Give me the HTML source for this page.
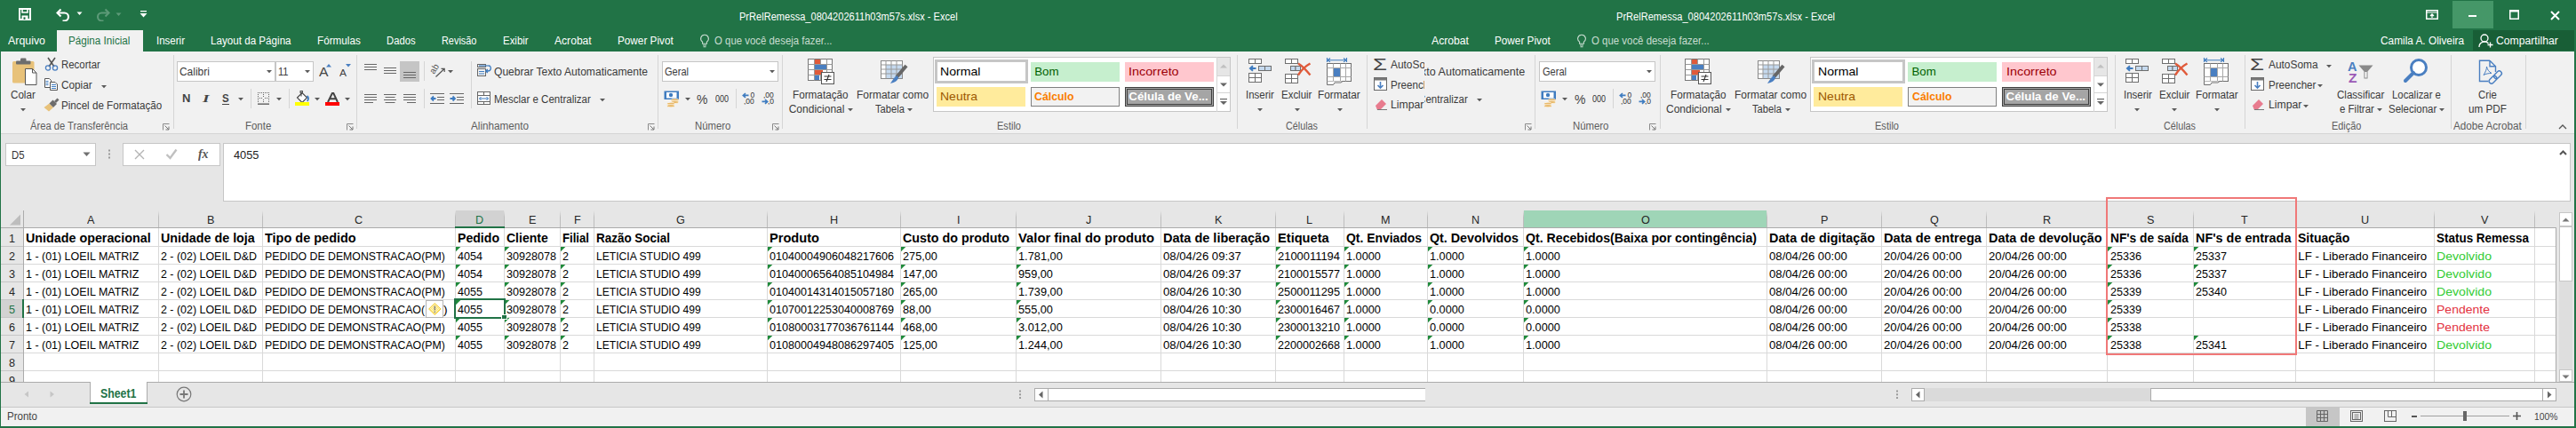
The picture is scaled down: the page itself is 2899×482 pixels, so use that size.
<!DOCTYPE html>
<html><head><meta charset="utf-8"><style>
html,body{margin:0;padding:0;}
body{width:2899px;height:482px;position:relative;overflow:hidden;background:#217346;font-family:"Liberation Sans",sans-serif;}
.t{position:absolute;white-space:nowrap;line-height:1;transform-origin:0 0;}
</style></head><body>
<div style="position:absolute;left:0px;top:0px;width:2899px;height:482px;background:#217346"></div>
<div style="position:absolute;left:1px;top:58px;width:2896px;height:92px;background:#f1f1f1"></div>
<div style="position:absolute;left:1px;top:150px;width:2896px;height:1px;background:#d4d4d4"></div>
<div style="position:absolute;left:1px;top:151px;width:2896px;height:279px;background:#e6e6e6"></div>
<div style="position:absolute;left:1px;top:430px;width:2896px;height:29px;background:#e6e6e6"></div>
<div style="position:absolute;left:1px;top:459px;width:2896px;height:21px;background:#f1f1f1"></div>
<svg style="position:absolute;left:20px;top:8px;" width="16" height="16" viewBox="0 0 16 16"><path d="M2 2h12v12H2z" fill="none" stroke="#fff" stroke-width="2"/><path d="M5 2v4h6V2" fill="none" stroke="#fff" stroke-width="1.6"/><path d="M4.5 14v-4.5h7V14" fill="#fff"/><rect x="6.5" y="11.3" width="2" height="2.7" fill="#217346"/></svg>
<svg style="position:absolute;left:62px;top:8px;" width="18" height="16" viewBox="0 0 18 16"><path d="M2.5 6.5h8a4.5 4.5 0 0 1 0 9h-2" fill="none" stroke="#fff" stroke-width="2.1"/><path d="M6.5 2.5l-4 4 4 4" fill="none" stroke="#fff" stroke-width="2.1"/></svg>
<svg style="position:absolute;left:86px;top:13px;" width="8" height="5" viewBox="0 0 8 5"><path d="M0.5 0.5h6l-3 3.5z" fill="#fff"/></svg>
<svg style="position:absolute;left:107px;top:8px;" width="18" height="16" viewBox="0 0 18 16"><path d="M15.5 6.5h-8a4.5 4.5 0 0 0 0 9h2" fill="none" stroke="#5d9a78" stroke-width="2.1"/><path d="M11.5 2.5l4 4-4 4" fill="none" stroke="#5d9a78" stroke-width="2.1"/></svg>
<svg style="position:absolute;left:130px;top:14px;" width="8" height="5" viewBox="0 0 8 5"><path d="M0.5 0.5h6l-3 3.5z" fill="#5d9a78"/></svg>
<svg style="position:absolute;left:157px;top:11px;" width="9" height="10" viewBox="0 0 9 10"><rect x="1" y="1" width="7" height="1.3" fill="#fff"/><path d="M0.5 4h8l-4 4.5z" fill="#fff"/></svg>
<div class="t" id="t0" style="left:832.00px;top:12.84px;font-size:12px;font-weight:400;color:#ffffff;font-family:'Liberation Sans',sans-serif;transform:scaleX(0.9213);">PrRelRemessa_0804202611h03m57s.xlsx - Excel</div>
<div class="t" id="t1" style="left:1818.70px;top:12.84px;font-size:12px;font-weight:400;color:#ffffff;font-family:'Liberation Sans',sans-serif;transform:scaleX(0.9228);">PrRelRemessa_0804202611h03m57s.xlsx - Excel</div>
<svg style="position:absolute;left:2729.5px;top:11px;" width="14" height="11" viewBox="0 0 14 11"><rect x="0.75" y="0.75" width="12.5" height="9.5" fill="none" stroke="#fff" stroke-width="1.5"/><path d="M0.5 3h13" stroke="#fff"/><path d="M7 9V5M5 7l2-2 2 2" fill="none" stroke="#fff" stroke-width="1.3"/></svg>
<div style="position:absolute;left:2760px;top:1px;width:46px;height:31px;background:#459768"></div>
<div style="position:absolute;left:2778px;top:16.5px;width:9px;height:2px;background:#fff"></div>
<svg style="position:absolute;left:2824px;top:11px;" width="11" height="11" viewBox="0 0 11 11"><rect x="0.75" y="0.75" width="9.5" height="9.5" fill="none" stroke="#fff" stroke-width="1.5"/><rect x="0" y="0" width="11" height="2.5" fill="#fff"/></svg>
<svg style="position:absolute;left:2869.5px;top:11.5px;" width="11" height="11" viewBox="0 0 11 11"><path d="M1 1l9 9M10 1l-9 9" stroke="#fff" stroke-width="2"/></svg>
<div style="position:absolute;left:64px;top:34px;width:97px;height:24px;background:#f1f1f1"></div>
<div class="t" id="t2" style="left:9.00px;top:40.34px;font-size:12px;font-weight:400;color:#ffffff;font-family:'Liberation Sans',sans-serif;transform:scaleX(1.0323);">Arquivo</div>
<div class="t" id="t3" style="left:77.30px;top:40.34px;font-size:12px;font-weight:400;color:#217346;font-family:'Liberation Sans',sans-serif;transform:scaleX(0.9721);">Página Inicial</div>
<div class="t" id="t4" style="left:176.00px;top:40.34px;font-size:12px;font-weight:400;color:#ffffff;font-family:'Liberation Sans',sans-serif;transform:scaleX(0.9597);">Inserir</div>
<div class="t" id="t5" style="left:237.00px;top:40.34px;font-size:12px;font-weight:400;color:#ffffff;font-family:'Liberation Sans',sans-serif;transform:scaleX(0.9698);">Layout da Página</div>
<div class="t" id="t6" style="left:357.00px;top:40.34px;font-size:12px;font-weight:400;color:#ffffff;font-family:'Liberation Sans',sans-serif;transform:scaleX(0.9757);">Fórmulas</div>
<div class="t" id="t7" style="left:435.30px;top:40.34px;font-size:12px;font-weight:400;color:#ffffff;font-family:'Liberation Sans',sans-serif;transform:scaleX(0.9398);">Dados</div>
<div class="t" id="t8" style="left:497.40px;top:40.34px;font-size:12px;font-weight:400;color:#ffffff;font-family:'Liberation Sans',sans-serif;transform:scaleX(0.9087);">Revisão</div>
<div class="t" id="t9" style="left:566.30px;top:40.34px;font-size:12px;font-weight:400;color:#ffffff;font-family:'Liberation Sans',sans-serif;transform:scaleX(0.9528);">Exibir</div>
<div class="t" id="t10" style="left:624.20px;top:40.34px;font-size:12px;font-weight:400;color:#ffffff;font-family:'Liberation Sans',sans-serif;transform:scaleX(1.0082);">Acrobat</div>
<div class="t" id="t11" style="left:695.40px;top:40.34px;font-size:12px;font-weight:400;color:#ffffff;font-family:'Liberation Sans',sans-serif;transform:scaleX(0.9792);">Power Pivot</div>
<svg style="position:absolute;left:787px;top:38px;" width="12" height="16" viewBox="0 0 12 16"><path d="M6 1.2a4.3 4.3 0 0 0-2.4 7.9v2.2h4.8V9.1A4.3 4.3 0 0 0 6 1.2z" fill="none" stroke="#c9ddd1" stroke-width="1.1"/><path d="M4 13h4M4.5 14.8h3" stroke="#c9ddd1" stroke-width="1.1"/></svg>
<div class="t" id="t12" style="left:804.10px;top:40.34px;font-size:12px;font-weight:400;color:#c9ddd1;font-family:'Liberation Sans',sans-serif;transform:scaleX(0.9504);">O que você deseja fazer...</div>
<div class="t" id="t13" style="left:1611.00px;top:40.34px;font-size:12px;font-weight:400;color:#ffffff;font-family:'Liberation Sans',sans-serif;transform:scaleX(1.0155);">Acrobat</div>
<div class="t" id="t14" style="left:1682.00px;top:40.34px;font-size:12px;font-weight:400;color:#ffffff;font-family:'Liberation Sans',sans-serif;transform:scaleX(0.9792);">Power Pivot</div>
<svg style="position:absolute;left:1773.5px;top:38px;" width="12" height="16" viewBox="0 0 12 16"><path d="M6 1.2a4.3 4.3 0 0 0-2.4 7.9v2.2h4.8V9.1A4.3 4.3 0 0 0 6 1.2z" fill="none" stroke="#c9ddd1" stroke-width="1.1"/><path d="M4 13h4M4.5 14.8h3" stroke="#c9ddd1" stroke-width="1.1"/></svg>
<div class="t" id="t15" style="left:1790.60px;top:40.34px;font-size:12px;font-weight:400;color:#c9ddd1;font-family:'Liberation Sans',sans-serif;transform:scaleX(0.9525);">O que você deseja fazer...</div>
<div class="t" id="t16" style="left:2678.90px;top:40.34px;font-size:12px;font-weight:400;color:#ffffff;font-family:'Liberation Sans',sans-serif;transform:scaleX(0.9866);">Camila A. Oliveira</div>
<div style="position:absolute;left:2783px;top:34px;width:114px;height:23px;background:#185e36"></div>
<svg style="position:absolute;left:2789px;top:37px;" width="18" height="18" viewBox="0 0 18 18"><circle cx="7" cy="6" r="4" fill="none" stroke="#fff" stroke-width="1.3"/><path d="M1 16a6 6 0 0 1 10.5-4" fill="none" stroke="#fff" stroke-width="1.3"/><path d="M13.5 10.5v6M10.5 13.5h6" stroke="#fff" stroke-width="1.3"/></svg>
<div class="t" id="t17" style="left:2809.00px;top:40.34px;font-size:12px;font-weight:400;color:#ffffff;font-family:'Liberation Sans',sans-serif;transform:scaleX(1.0160);">Compartilhar</div>
<div style="position:absolute;left:0;top:0;width:1603px;height:150px;overflow:hidden">
<svg style="position:absolute;left:13px;top:64px;" width="30" height="33" viewBox="0 0 30 33"><rect x="1" y="5" width="24.5" height="24.5" rx="1.5" fill="#e8c27a"/><rect x="5" y="4.5" width="16.5" height="4" rx="1" fill="#6d6d6d"/><rect x="10" y="1.5" width="6.5" height="4" rx="1.2" fill="#6d6d6d"/><path d="M15.5 13.5h8l4.5 4.5v13.5h-12.5z" fill="#fff" stroke="#555"/><path d="M23.5 13.5v4.5h4.5" fill="none" stroke="#555"/></svg>
<div class="t" id="t18" style="left:12.20px;top:100.84px;font-size:12px;font-weight:400;color:#3a3a3a;font-family:'Liberation Sans',sans-serif;transform:scaleX(0.9691);">Colar</div>
<svg style="position:absolute;left:23px;top:121.5px;" width="6" height="4" viewBox="0 0 6 4"><path d="M0 0H6L3 3.2z" fill="#595959"/></svg>
<svg style="position:absolute;left:50px;top:64px;" width="16" height="16" viewBox="0 0 16 16"><path d="M4 1l7 10M12 1L5 11" stroke="#555" stroke-width="1.6"/><circle cx="4" cy="12.5" r="2.6" fill="none" stroke="#4a7fc1" stroke-width="1.3"/><circle cx="12" cy="12.5" r="2.6" fill="none" stroke="#4a7fc1" stroke-width="1.3"/></svg>
<div class="t" id="t19" style="left:69.30px;top:66.84px;font-size:12px;font-weight:400;color:#3a3a3a;font-family:'Liberation Sans',sans-serif;transform:scaleX(0.9519);">Recortar</div>
<svg style="position:absolute;left:49px;top:87px;" width="17" height="16" viewBox="0 0 17 16"><path d="M1.5 1.5H6.5L8.5 3.5V11.5H1.5Z" fill="#fff" stroke="#555"/><g fill="#3f7cc0"><rect x="2.5" y="4" width="3" height="1"/><rect x="2.5" y="6" width="3" height="1"/><rect x="2.5" y="8" width="3" height="1"/></g><path d="M7.5 5.5H13L15.5 8V14.5H7.5Z" fill="#fff" stroke="#555"/><g fill="#3f7cc0"><rect x="9" y="8" width="5" height="1"/><rect x="9" y="10" width="5" height="1"/><rect x="9" y="12" width="5" height="1"/></g></svg>
<div class="t" id="t20" style="left:69.30px;top:90.14px;font-size:12px;font-weight:400;color:#3a3a3a;font-family:'Liberation Sans',sans-serif;transform:scaleX(0.9814);">Copiar</div>
<svg style="position:absolute;left:114.3px;top:96px;" width="6" height="4" viewBox="0 0 6 4"><path d="M0 0H6L3 3.2z" fill="#595959"/></svg>
<svg style="position:absolute;left:49px;top:109px;" width="18" height="17" viewBox="0 0 18 17"><path d="M0.5 12L6.5 7.5L11 12L6 16.5Z" fill="#e8c27a"/><path d="M6.5 7.5L10.5 3.5L15 8L11 12Z" fill="#6d6d6d"/><path d="M12 5L15.5 1.5L17.5 3.5L14 7Z" fill="#6d6d6d"/></svg>
<div class="t" id="t21" style="left:69.30px;top:112.94px;font-size:12px;font-weight:400;color:#3a3a3a;font-family:'Liberation Sans',sans-serif;transform:scaleX(0.9697);">Pincel de Formatação</div>
<div class="t" id="t22" style="left:33.70px;top:136.04px;font-size:12px;font-weight:400;color:#5c5c5c;font-family:'Liberation Sans',sans-serif;transform:scaleX(0.9324);">Área de Transferência</div>
<svg style="position:absolute;left:183px;top:139px;" width="8" height="8" viewBox="0 0 8 8"><path d="M0.5 7.5V0.5H7.5" fill="none" stroke="#8a8a8a"/><path d="M2.5 2.5L7 7M7 3.5V7H3.5" fill="none" stroke="#777"/></svg>
<div style="position:absolute;left:194.5px;top:62px;width:1px;height:83px;background:#d5d5d5"></div>
<div style="position:absolute;left:199px;top:69px;width:111px;height:23px;background:#fff;box-sizing:border-box;border:1px solid #c6c6c6"></div>
<div class="t" id="t23" style="left:202.20px;top:74.54px;font-size:12px;font-weight:400;color:#3a3a3a;font-family:'Liberation Sans',sans-serif;transform:scaleX(0.9937);">Calibri</div>
<svg style="position:absolute;left:300px;top:79px;" width="6" height="4" viewBox="0 0 6 4"><path d="M0 0H6L3 3.2z" fill="#595959"/></svg>
<div style="position:absolute;left:309.5px;top:69px;width:43px;height:23px;background:#fff;box-sizing:border-box;border:1px solid #c6c6c6"></div>
<div class="t" id="t24" style="left:313.20px;top:74.54px;font-size:12px;font-weight:400;color:#3a3a3a;font-family:'Liberation Sans',sans-serif;transform:scaleX(0.9223);">11</div>
<svg style="position:absolute;left:343px;top:79px;" width="6" height="4" viewBox="0 0 6 4"><path d="M0 0H6L3 3.2z" fill="#595959"/></svg>
<div class="t" id="t25" style="left:358.50px;top:74.45px;font-size:14px;font-weight:400;color:#444;font-family:'Liberation Sans',sans-serif;transform:scaleX(1.1237);">A</div>
<svg style="position:absolute;left:367px;top:72px;" width="6" height="4" viewBox="0 0 6 4"><path d="M0 3.5L3 0 6 3.5z" fill="#4a7fc1"/></svg>
<div class="t" id="t26" style="left:382.00px;top:76.99px;font-size:11px;font-weight:400;color:#444;font-family:'Liberation Sans',sans-serif;transform:scaleX(1.0894);">A</div>
<svg style="position:absolute;left:388.5px;top:72px;" width="6" height="4" viewBox="0 0 6 4"><path d="M0 0H6L3 3.5z" fill="#4a7fc1"/></svg>
<div class="t" id="t27" style="left:205.00px;top:104.62px;font-size:12.5px;font-weight:700;color:#444;font-family:'Liberation Sans',sans-serif;transform:scaleX(1.0408);">N</div>
<div class="t" id="t28" style="left:227.50px;top:103.77px;font-size:13.5px;font-weight:700;color:#444;font-family:'Liberation Serif',sans-serif;transform:scaleX(1.4243);font-style:italic;">I</div>
<div class="t" id="t29" style="left:250.00px;top:104.62px;font-size:12.5px;font-weight:700;color:#444;font-family:'Liberation Sans',sans-serif;transform:scaleX(0.9228);">S</div>
<div style="position:absolute;left:250px;top:117px;width:8px;height:1.2px;background:#444"></div>
<svg style="position:absolute;left:268px;top:110px;" width="6" height="4" viewBox="0 0 6 4"><path d="M0 0H6L3 3.2z" fill="#595959"/></svg>
<div style="position:absolute;left:281.5px;top:100px;width:1px;height:22px;background:#d5d5d5"></div>
<svg style="position:absolute;left:290px;top:104px;" width="14" height="15" viewBox="0 0 14 15"><g fill="#666"><rect x="0" y="0" width="1" height="1"/><rect x="2" y="0" width="1" height="1"/><rect x="4" y="0" width="1" height="1"/><rect x="6" y="0" width="1" height="1"/><rect x="8" y="0" width="1" height="1"/><rect x="10" y="0" width="1" height="1"/><rect x="12" y="0" width="1" height="1"/><rect x="0" y="2" width="1" height="1"/><rect x="0" y="4" width="1" height="1"/><rect x="0" y="6" width="1" height="1"/><rect x="0" y="8" width="1" height="1"/><rect x="0" y="10" width="1" height="1"/><rect x="12" y="2" width="1" height="1"/><rect x="12" y="4" width="1" height="1"/><rect x="12" y="6" width="1" height="1"/><rect x="12" y="8" width="1" height="1"/><rect x="12" y="10" width="1" height="1"/><rect x="6" y="2" width="1" height="1"/><rect x="6" y="4" width="1" height="1"/><rect x="6" y="8" width="1" height="1"/><rect x="6" y="10" width="1" height="1"/><rect x="2" y="6" width="1" height="1"/><rect x="4" y="6" width="1" height="1"/><rect x="8" y="6" width="1" height="1"/><rect x="10" y="6" width="1" height="1"/></g><rect x="0" y="12.5" width="13" height="1.3" fill="#555"/></svg>
<svg style="position:absolute;left:311px;top:110px;" width="6" height="4" viewBox="0 0 6 4"><path d="M0 0H6L3 3.2z" fill="#595959"/></svg>
<div style="position:absolute;left:324.5px;top:100px;width:1px;height:22px;background:#d5d5d5"></div>
<svg style="position:absolute;left:332px;top:102px;" width="17" height="17" viewBox="0 0 17 17"><path d="M2.5 8l5.5-5.5 5.5 5.5-5.5 5.5z" fill="#fff" stroke="#444" stroke-width="1.1"/><path d="M7 1.5v5" stroke="#444" stroke-width="1.1"/><rect x="6" y="0.5" width="2.5" height="2" fill="none" stroke="#444" stroke-width="0.9"/><path d="M13.5 6c2 1.5 2 3.5 0.3 6" fill="none" stroke="#3f7cc0" stroke-width="1.8"/><rect x="0" y="13" width="16" height="4" fill="#ffff00"/></svg>
<svg style="position:absolute;left:354px;top:110px;" width="6" height="4" viewBox="0 0 6 4"><path d="M0 0H6L3 3.2z" fill="#595959"/></svg>
<svg style="position:absolute;left:366px;top:104px;" width="17" height="15" viewBox="0 0 17 15"><path d="M3 11L8 0.8h1.2L14 11M5 7.3h7" fill="none" stroke="#444" stroke-width="2"/><rect x="0" y="11" width="16" height="4" fill="#ff0000"/></svg>
<svg style="position:absolute;left:387.5px;top:110px;" width="6" height="4" viewBox="0 0 6 4"><path d="M0 0H6L3 3.2z" fill="#595959"/></svg>
<div class="t" id="t30" style="left:275.50px;top:136.04px;font-size:12px;font-weight:400;color:#5c5c5c;font-family:'Liberation Sans',sans-serif;transform:scaleX(0.9548);">Fonte</div>
<svg style="position:absolute;left:389.5px;top:139px;" width="8" height="8" viewBox="0 0 8 8"><path d="M0.5 7.5V0.5H7.5" fill="none" stroke="#8a8a8a"/><path d="M2.5 2.5L7 7M7 3.5V7H3.5" fill="none" stroke="#777"/></svg>
<div style="position:absolute;left:401px;top:62px;width:1px;height:83px;background:#d5d5d5"></div>
<svg style="position:absolute;left:410px;top:70px;" width="16" height="20" viewBox="0 0 16 20"><rect x="0" y="2" width="14" height="1" fill="#666"/><rect x="0" y="5" width="14" height="1" fill="#666"/><rect x="0" y="8" width="14" height="1" fill="#666"/></svg>
<svg style="position:absolute;left:432px;top:70px;" width="16" height="20" viewBox="0 0 16 20"><rect x="0" y="6" width="14" height="1" fill="#666"/><rect x="0" y="9" width="14" height="1" fill="#666"/><rect x="0" y="12" width="14" height="1" fill="#666"/></svg>
<div style="position:absolute;left:450px;top:69px;width:22px;height:23px;background:#c5c5c5"></div>
<svg style="position:absolute;left:454px;top:70px;" width="16" height="20" viewBox="0 0 16 20"><rect x="0" y="11" width="14" height="1" fill="#666"/><rect x="0" y="14" width="14" height="1" fill="#666"/><rect x="0" y="17" width="14" height="1" fill="#666"/></svg>
<svg style="position:absolute;left:484px;top:71px;" width="18" height="17" viewBox="0 0 18 17"><text x="0" y="0" font-size="10" fill="#555" font-family="Liberation Sans" transform="translate(4.5 13) rotate(-58)">ab</text><path d="M6.5 15.5L16 6.5M12.5 6.3H16.2V10" fill="none" stroke="#555" stroke-width="1.2"/></svg>
<svg style="position:absolute;left:504px;top:79px;" width="6" height="4" viewBox="0 0 6 4"><path d="M0 0H6L3 3.2z" fill="#595959"/></svg>
<div style="position:absolute;left:476.6px;top:69px;width:1px;height:22px;background:#d5d5d5"></div>
<div style="position:absolute;left:529.8px;top:69px;width:1px;height:53px;background:#d5d5d5"></div>
<svg style="position:absolute;left:536px;top:71px;" width="18" height="16" viewBox="0 0 18 16"><rect x="1.5" y="1.5" width="9" height="3" fill="none" stroke="#666"/><path d="M3 3h11" stroke="#3f7cc0" stroke-width="1.2"/><rect x="1.5" y="6.5" width="9" height="8" fill="none" stroke="#666"/><path d="M3 9.5h6M3 12h6" stroke="#3f7cc0"/><path d="M14 3c3 0 3.5 6-1 6h-2M12.8 7l-2 2 2 2" fill="none" stroke="#3f7cc0" stroke-width="1.3"/></svg>
<div class="t" id="t31" style="left:556.00px;top:74.54px;font-size:12px;font-weight:400;color:#3a3a3a;font-family:'Liberation Sans',sans-serif;transform:scaleX(1.0065);">Quebrar Texto Automaticamente</div>
<svg style="position:absolute;left:410px;top:104px;" width="16" height="20" viewBox="0 0 16 20"><rect x="0" y="2" width="14" height="1" fill="#666"/><rect x="0" y="5" width="14" height="1" fill="#666"/><rect x="0" y="8" width="14" height="1" fill="#666"/><rect x="0" y="11" width="10" height="1" fill="#666"/></svg>
<svg style="position:absolute;left:432px;top:104px;" width="16" height="20" viewBox="0 0 16 20"><rect x="0" y="2" width="14" height="1" fill="#666"/><rect x="1.5" y="5" width="11" height="1" fill="#666"/><rect x="0" y="8" width="14" height="1" fill="#666"/><rect x="1.5" y="11" width="11" height="1" fill="#666"/></svg>
<svg style="position:absolute;left:454px;top:104px;" width="16" height="20" viewBox="0 0 16 20"><rect x="0" y="2" width="14" height="1" fill="#666"/><rect x="0" y="5" width="14" height="1" fill="#666"/><rect x="0" y="8" width="14" height="1" fill="#666"/><rect x="4" y="11" width="10" height="1" fill="#666"/></svg>
<div style="position:absolute;left:476.6px;top:100px;width:1px;height:22px;background:#d5d5d5"></div>
<svg style="position:absolute;left:484px;top:104px;" width="17" height="14" viewBox="0 0 17 14"><path d="M0 1.5h16M8 5.5h8M8 8.5h8M0 12.5h16" stroke="#666"/><path d="M6.5 7H1.5M4 4.5L1.5 7 4 9.5" fill="none" stroke="#3f7cc0" stroke-width="1.8"/></svg>
<svg style="position:absolute;left:506px;top:104px;" width="17" height="14" viewBox="0 0 17 14"><path d="M0 1.5h16M8 5.5h8M8 8.5h8M0 12.5h16" stroke="#666"/><path d="M0.5 7h5.5M3.5 4.5L6 7 3.5 9.5" fill="none" stroke="#3f7cc0" stroke-width="1.8"/></svg>
<svg style="position:absolute;left:537px;top:103px;" width="16" height="16" viewBox="0 0 16 16"><rect x="0.5" y="0.5" width="14" height="14" fill="#fff" stroke="#666"/><path d="M0.5 4.5h14M0.5 11.5h14M7.5 0.5v4M7.5 11.5v3" stroke="#666"/><path d="M2.5 8h10M4.5 6L2.5 8 4.5 10M10.5 6L12.5 8 10.5 10" fill="none" stroke="#3f7cc0"/></svg>
<div class="t" id="t32" style="left:556.00px;top:105.64px;font-size:12px;font-weight:400;color:#3a3a3a;font-family:'Liberation Sans',sans-serif;transform:scaleX(0.9596);">Mesclar e Centralizar</div>
<svg style="position:absolute;left:675px;top:111px;" width="6" height="4" viewBox="0 0 6 4"><path d="M0 0H6L3 3.2z" fill="#595959"/></svg>
<div class="t" id="t33" style="left:530.30px;top:136.04px;font-size:12px;font-weight:400;color:#5c5c5c;font-family:'Liberation Sans',sans-serif;transform:scaleX(0.9742);">Alinhamento</div>
<svg style="position:absolute;left:729px;top:139px;" width="8" height="8" viewBox="0 0 8 8"><path d="M0.5 7.5V0.5H7.5" fill="none" stroke="#8a8a8a"/><path d="M2.5 2.5L7 7M7 3.5V7H3.5" fill="none" stroke="#777"/></svg>
<div style="position:absolute;left:740px;top:62px;width:1px;height:83px;background:#d5d5d5"></div>
<div style="position:absolute;left:745px;top:69px;width:131px;height:23px;background:#fff;box-sizing:border-box;border:1px solid #c6c6c6"></div>
<div class="t" id="t34" style="left:748.30px;top:74.54px;font-size:12px;font-weight:400;color:#3a3a3a;font-family:'Liberation Sans',sans-serif;transform:scaleX(0.9201);">Geral</div>
<svg style="position:absolute;left:866px;top:79px;" width="6" height="4" viewBox="0 0 6 4"><path d="M0 0H6L3 3.2z" fill="#595959"/></svg>
<svg style="position:absolute;left:747px;top:102px;" width="18" height="19" viewBox="0 0 18 19"><rect x="0.5" y="0.5" width="16.5" height="9.5" fill="#3f7cc0"/><rect x="3" y="2" width="11.5" height="6.5" fill="#fff"/><circle cx="8" cy="5" r="2.2" fill="#3f7cc0"/><g fill="#e8b96a" stroke="#fff" stroke-width="0.6"><ellipse cx="12.5" cy="10.5" rx="4.3" ry="1.6"/><ellipse cx="12.5" cy="13" rx="4.3" ry="1.6"/><ellipse cx="8" cy="14.8" rx="4.3" ry="1.6"/><ellipse cx="8" cy="17.2" rx="4.3" ry="1.6"/></g></svg>
<svg style="position:absolute;left:770.5px;top:110px;" width="6" height="4" viewBox="0 0 6 4"><path d="M0 0H6L3 3.2z" fill="#595959"/></svg>
<div class="t" id="t35" style="left:784.30px;top:105.15px;font-size:14px;font-weight:400;color:#444;font-family:'Liberation Sans',sans-serif;transform:scaleX(0.9957);">%</div>
<div class="t" id="t36" style="left:804.50px;top:105.61px;font-size:10.5px;font-weight:400;color:#333;font-family:'Liberation Sans',sans-serif;transform:scaleX(0.8556);">000</div>
<div style="position:absolute;left:827.6px;top:100px;width:1px;height:22px;background:#d5d5d5"></div>
<svg style="position:absolute;left:835px;top:103px;" width="16" height="15" viewBox="0 0 16 15"><text x="9.5" y="6.8" font-size="8.5" fill="#333" font-family="Liberation Sans">0</text><text x="2" y="14" font-size="8.5" fill="#333" font-family="Liberation Sans">,00</text><path d="M7.5 4.4H1.5M4 2L1.3 4.4 4 6.8" fill="none" stroke="#3f7cc0" stroke-width="1.6"/></svg>
<svg style="position:absolute;left:857px;top:103px;" width="16" height="15" viewBox="0 0 16 15"><text x="2" y="6.8" font-size="8.5" fill="#333" font-family="Liberation Sans">,00</text><text x="7" y="14" font-size="8.5" fill="#333" font-family="Liberation Sans">,0</text><path d="M0.5 11.4h6M4 9L6.7 11.4 4 13.8" fill="none" stroke="#3f7cc0" stroke-width="1.6"/></svg>
<div class="t" id="t37" style="left:782.30px;top:136.04px;font-size:12px;font-weight:400;color:#5c5c5c;font-family:'Liberation Sans',sans-serif;transform:scaleX(0.9464);">Número</div>
<svg style="position:absolute;left:869px;top:139px;" width="8" height="8" viewBox="0 0 8 8"><path d="M0.5 7.5V0.5H7.5" fill="none" stroke="#8a8a8a"/><path d="M2.5 2.5L7 7M7 3.5V7H3.5" fill="none" stroke="#777"/></svg>
<div style="position:absolute;left:880.4px;top:62px;width:1px;height:83px;background:#d5d5d5"></div>
<svg style="position:absolute;left:909px;top:66px;" width="31" height="30" viewBox="0 0 31 30"><rect x="0.5" y="0.5" width="27" height="24" fill="#fff" stroke="#777"/><path d="M0.5 6.5h27M0.5 12.5h27M0.5 18.5h27M7.5 0.5v24M14.5 0.5v24M21.5 0.5v24" stroke="#999"/><rect x="8" y="1" width="6" height="5" fill="#e05a3a"/><rect x="8" y="7" width="13" height="5" fill="#4a7fc1"/><rect x="8" y="13" width="9" height="5" fill="#e05a3a"/><rect x="8" y="19" width="5" height="5" fill="#4a7fc1"/><rect x="15.5" y="15.5" width="14" height="13" fill="#fff" stroke="#555"/><path d="M18.5 20h8M18.5 23.5h8M24 18l-3 8" stroke="#333" stroke-width="1.1"/></svg>
<div class="t" id="t38" style="left:892.20px;top:100.84px;font-size:12px;font-weight:400;color:#3a3a3a;font-family:'Liberation Sans',sans-serif;transform:scaleX(0.9776);">Formatação</div>
<div class="t" id="t39" style="left:887.70px;top:116.84px;font-size:12px;font-weight:400;color:#3a3a3a;font-family:'Liberation Sans',sans-serif;">Condicional</div>
<svg style="position:absolute;left:954.3px;top:122px;" width="6" height="4" viewBox="0 0 6 4"><path d="M0 0H6L3 3.2z" fill="#595959"/></svg>
<svg style="position:absolute;left:991px;top:68px;" width="31" height="28" viewBox="0 0 31 28"><rect x="0.5" y="0.5" width="24" height="20" fill="#fff" stroke="#888"/><rect x="6" y="5" width="18" height="15" fill="#c5d9ee"/><path d="M0.5 5h24M0.5 10h24M0.5 15h24M6 0.5v20M12 0.5v20M18 0.5v20" stroke="#999"/><path d="M29 6L18 19" stroke="#666" stroke-width="4"/><path d="M19 17c-3 1-5 4-8 9 5-1 8-3 9-6z" fill="#4a7fc1"/></svg>
<div class="t" id="t40" style="left:964.30px;top:100.84px;font-size:12px;font-weight:400;color:#3a3a3a;font-family:'Liberation Sans',sans-serif;transform:scaleX(0.9968);">Formatar como</div>
<div class="t" id="t41" style="left:984.70px;top:116.84px;font-size:12px;font-weight:400;color:#3a3a3a;font-family:'Liberation Sans',sans-serif;transform:scaleX(0.9300);">Tabela</div>
<svg style="position:absolute;left:1021.4px;top:122px;" width="6" height="4" viewBox="0 0 6 4"><path d="M0 0H6L3 3.2z" fill="#595959"/></svg>
<div style="position:absolute;left:1050px;top:64px;width:335px;height:62px;background:#fff;box-sizing:border-box;border:1px solid #c6c6c6"></div>
<div style="position:absolute;left:1052px;top:67px;width:105px;height:27px;background:#fff;box-sizing:border-box;border:3px solid #c6c6c6"></div>
<div class="t" id="t42" style="left:1058.30px;top:73.74px;font-size:13.3px;font-weight:400;color:#000;font-family:'Liberation Sans',sans-serif;transform:scaleX(1.0616);">Normal</div>
<div style="position:absolute;left:1160px;top:70px;width:100px;height:22px;background:#c6efce"></div>
<div class="t" id="t43" style="left:1164.20px;top:73.74px;font-size:13.3px;font-weight:400;color:#006100;font-family:'Liberation Sans',sans-serif;">Bom</div>
<div style="position:absolute;left:1266px;top:70px;width:100px;height:22px;background:#ffc7ce"></div>
<div class="t" id="t44" style="left:1270.30px;top:73.74px;font-size:13.3px;font-weight:400;color:#9c0006;font-family:'Liberation Sans',sans-serif;transform:scaleX(1.0784);">Incorreto</div>
<div style="position:absolute;left:1054px;top:98px;width:100px;height:22px;background:#ffeb9c"></div>
<div class="t" id="t45" style="left:1058.30px;top:101.74px;font-size:13.3px;font-weight:400;color:#9c5700;font-family:'Liberation Sans',sans-serif;transform:scaleX(1.0521);">Neutra</div>
<div style="position:absolute;left:1160px;top:98px;width:100px;height:22px;background:#f2f2f2;box-sizing:border-box;border:1px solid #7f7f7f"></div>
<div class="t" id="t46" style="left:1164.20px;top:101.74px;font-size:13.3px;font-weight:700;color:#fa7d00;font-family:'Liberation Sans',sans-serif;transform:scaleX(0.9265);">Cálculo</div>
<div style="position:absolute;left:1266px;top:98px;width:100px;height:22px;background:#a5a5a5;box-sizing:border-box;border:3px double #3f3f3f"></div>
<div class="t" id="t47" style="left:1270.30px;top:101.74px;font-size:13.3px;font-weight:700;color:#fff;font-family:'Liberation Sans',sans-serif;">Célula de Ve...</div>
<div style="position:absolute;left:1370px;top:65px;width:14px;height:20px;background:#e6e6e6"></div>
<svg style="position:absolute;left:1373px;top:72px;" width="8" height="5" viewBox="0 0 8 5"><path d="M0 4.5L4 0.5 8 4.5z" fill="#c0c0c0"/></svg>
<div style="position:absolute;left:1370px;top:85px;width:14px;height:1px;background:#d5d5d5"></div>
<div style="position:absolute;left:1370px;top:104px;width:14px;height:1px;background:#d5d5d5"></div>
<div style="position:absolute;left:1369px;top:64px;width:1px;height:62px;background:#d5d5d5"></div>
<svg style="position:absolute;left:1373px;top:93px;" width="8" height="5" viewBox="0 0 8 5"><path d="M0 0.5H8L4 4.5z" fill="#666"/></svg>
<svg style="position:absolute;left:1373px;top:111px;" width="8" height="8" viewBox="0 0 8 8"><rect x="0" y="0" width="8" height="1.2" fill="#666"/><path d="M0 3H8L4 7z" fill="#666"/></svg>
<div class="t" id="t48" style="left:1122.30px;top:136.04px;font-size:12px;font-weight:400;color:#5c5c5c;font-family:'Liberation Sans',sans-serif;transform:scaleX(0.9201);">Estilo</div>
<div style="position:absolute;left:1392.4px;top:62px;width:1px;height:83px;background:#d5d5d5"></div>
<svg style="position:absolute;left:1404px;top:65px;" width="28" height="29" viewBox="0 0 28 29"><g fill="#fff" stroke="#6e6e6e"><rect x="1.5" y="1.5" width="7" height="5"/><rect x="8.5" y="1.5" width="7" height="5"/><rect x="1.5" y="17.5" width="7" height="5"/><rect x="8.5" y="17.5" width="7" height="5"/><rect x="1.5" y="22.5" width="7" height="5"/><rect x="8.5" y="22.5" width="7" height="5"/></g><g fill="#c5d9ee" stroke="#6e6e6e"><rect x="12.5" y="9.5" width="7" height="5"/><rect x="19.5" y="9.5" width="7" height="5"/></g><path d="M9.5 12H3.5M6 9.3L3 12 6 14.7" fill="none" stroke="#3f7cc0" stroke-width="2"/></svg>
<div class="t" id="t49" style="left:1402.20px;top:100.84px;font-size:12px;font-weight:400;color:#3a3a3a;font-family:'Liberation Sans',sans-serif;transform:scaleX(0.9537);">Inserir</div>
<svg style="position:absolute;left:1415px;top:121.5px;" width="6" height="4" viewBox="0 0 6 4"><path d="M0 0H6L3 3.2z" fill="#595959"/></svg>
<svg style="position:absolute;left:1445px;top:65px;" width="31" height="30" viewBox="0 0 31 30"><g fill="#fff" stroke="#6e6e6e"><rect x="1.5" y="1.5" width="7" height="5"/><rect x="8.5" y="1.5" width="7" height="5"/><rect x="1.5" y="18.5" width="7" height="5"/><rect x="8.5" y="18.5" width="7" height="5"/><rect x="1.5" y="23.5" width="7" height="5"/><rect x="8.5" y="23.5" width="7" height="5"/></g><g fill="#c5d9ee" stroke="#6e6e6e"><rect x="7.5" y="9.5" width="5.5" height="5"/><rect x="13" y="9.5" width="5.5" height="5"/></g><path d="M16 6.5C20 9 25 14 29.5 19.5M29.5 6.5C24 9.5 19.5 14 16 19.5" fill="none" stroke="#e05a3a" stroke-width="2.4"/></svg>
<div class="t" id="t50" style="left:1442.20px;top:100.84px;font-size:12px;font-weight:400;color:#3a3a3a;font-family:'Liberation Sans',sans-serif;transform:scaleX(0.9551);">Excluir</div>
<svg style="position:absolute;left:1456.6px;top:121.5px;" width="6" height="4" viewBox="0 0 6 4"><path d="M0 0H6L3 3.2z" fill="#595959"/></svg>
<svg style="position:absolute;left:1492px;top:64px;" width="30" height="33" viewBox="0 0 30 33"><path d="M1.5 1v5M23.5 1v5M2 3.7h21M5 1.5L2 3.7 5 5.9M20 1.5L23 3.7 20 5.9" fill="none" stroke="#3f7cc0" stroke-width="1.1"/><rect x="1.5" y="7.5" width="27" height="20" fill="#fff" stroke="#6e6e6e"/><path d="M1.5 12.5h27M1.5 22.5h27M8.5 7.5v20M16.5 7.5v20M22.5 7.5v20" stroke="#a8a8a8"/><rect x="9" y="13" width="7" height="9" fill="#4a7fc1"/><path d="M1.5 27.5v4h7l1.5-2.5h7l2-1.5" fill="#fff" stroke="#6e6e6e"/></svg>
<div class="t" id="t51" style="left:1483.20px;top:100.84px;font-size:12px;font-weight:400;color:#3a3a3a;font-family:'Liberation Sans',sans-serif;transform:scaleX(0.9818);">Formatar</div>
<svg style="position:absolute;left:1505px;top:121.5px;" width="6" height="4" viewBox="0 0 6 4"><path d="M0 0H6L3 3.2z" fill="#595959"/></svg>
<div class="t" id="t52" style="left:1447.30px;top:136.04px;font-size:12px;font-weight:400;color:#5c5c5c;font-family:'Liberation Sans',sans-serif;transform:scaleX(0.8968);">Células</div>
<div style="position:absolute;left:1538.3px;top:62px;width:1px;height:83px;background:#d5d5d5"></div>
<div class="t" id="t53" style="left:1545.00px;top:62.92px;font-size:19px;font-weight:400;color:#444;font-family:'Liberation Sans',sans-serif;transform:scaleX(1.3617);">Σ</div>
<div class="t" id="t54" style="left:1565.30px;top:66.84px;font-size:12px;font-weight:400;color:#3a3a3a;font-family:'Liberation Sans',sans-serif;transform:scaleX(0.9920);">AutoSoma</div>
<svg style="position:absolute;left:1630.3px;top:73px;" width="6" height="4" viewBox="0 0 6 4"><path d="M0 0H6L3 3.2z" fill="#595959"/></svg>
<svg style="position:absolute;left:1546px;top:87px;" width="16" height="16" viewBox="0 0 16 16"><rect x="0.5" y="0.5" width="14" height="14" fill="#fff" stroke="#666"/><rect x="0.5" y="0.5" width="14" height="3" fill="#777"/><path d="M7.5 5v7M4.5 9l3 3 3-3" fill="none" stroke="#4a7fc1" stroke-width="1.6"/></svg>
<div class="t" id="t55" style="left:1565.30px;top:89.64px;font-size:12px;font-weight:400;color:#3a3a3a;font-family:'Liberation Sans',sans-serif;transform:scaleX(0.9643);">Preencher</div>
<svg style="position:absolute;left:1620.3px;top:95px;" width="6" height="4" viewBox="0 0 6 4"><path d="M0 0H6L3 3.2z" fill="#595959"/></svg>
<svg style="position:absolute;left:1546px;top:110px;" width="16" height="14" viewBox="0 0 16 14"><path d="M2 9l7-7 5 5-7 7H4z" fill="#e87b8e"/><path d="M4 13.5h11" stroke="#777"/></svg>
<div class="t" id="t56" style="left:1565.30px;top:112.34px;font-size:12px;font-weight:400;color:#3a3a3a;font-family:'Liberation Sans',sans-serif;transform:scaleX(1.0194);">Limpar</div>
<svg style="position:absolute;left:1604.7px;top:118px;" width="6" height="4" viewBox="0 0 6 4"><path d="M0 0H6L3 3.2z" fill="#595959"/></svg>
<div class="t" id="t57" style="left:1655.00px;top:67.30px;font-size:15px;font-weight:700;color:#4a7fc1;font-family:'Liberation Sans',sans-serif;transform:scaleX(0.9683);">A</div>
<div class="t" id="t58" style="left:1655.50px;top:80.30px;font-size:15px;font-weight:700;color:#9b59b6;font-family:'Liberation Sans',sans-serif;transform:scaleX(1.0358);">Z</div>
<svg style="position:absolute;left:1667px;top:73px;" width="17" height="16" viewBox="0 0 17 16"><path d="M0.5 0.5h16L10.5 7.5v8h-4v-8z" fill="#8a8a8a"/><path d="M7.5 8v6.5h2V8" fill="#fff"/></svg>
<div class="t" id="t59" style="left:1642.70px;top:100.84px;font-size:12px;font-weight:400;color:#3a3a3a;font-family:'Liberation Sans',sans-serif;transform:scaleX(0.9631);">Classificar</div>
<div class="t" id="t60" style="left:1646.00px;top:116.84px;font-size:12px;font-weight:400;color:#3a3a3a;font-family:'Liberation Sans',sans-serif;transform:scaleX(0.9564);">e Filtrar</div>
<svg style="position:absolute;left:1687.7px;top:122px;" width="6" height="4" viewBox="0 0 6 4"><path d="M0 0H6L3 3.2z" fill="#595959"/></svg>
<svg style="position:absolute;left:1717px;top:65px;" width="29" height="29" viewBox="0 0 29 29"><circle cx="18" cy="11" r="8.5" fill="#fff" stroke="#4a7fc1" stroke-width="3"/><path d="M12 17L3 26" stroke="#4a7fc1" stroke-width="4" stroke-linecap="round"/></svg>
<div class="t" id="t61" style="left:1704.80px;top:100.84px;font-size:12px;font-weight:400;color:#3a3a3a;font-family:'Liberation Sans',sans-serif;transform:scaleX(0.9460);">Localizar e</div>
<div class="t" id="t62" style="left:1700.40px;top:116.84px;font-size:12px;font-weight:400;color:#3a3a3a;font-family:'Liberation Sans',sans-serif;transform:scaleX(0.9576);">Selecionar</div>
<svg style="position:absolute;left:1757.4px;top:122px;" width="6" height="4" viewBox="0 0 6 4"><path d="M0 0H6L3 3.2z" fill="#595959"/></svg>
<div class="t" id="t63" style="left:1637.10px;top:136.04px;font-size:12px;font-weight:400;color:#5c5c5c;font-family:'Liberation Sans',sans-serif;transform:scaleX(0.9073);">Edição</div>
<div style="position:absolute;left:1770.3px;top:62px;width:1px;height:83px;background:#d5d5d5"></div>
<svg style="position:absolute;left:1802px;top:67px;" width="29" height="30" viewBox="0 0 29 30"><g fill="none" stroke="#4a7fc1" stroke-width="1.4"><path d="M13 1.2H1.5V24.5H11"/><path d="M13 1.2L19.5 7.7V14"/><path d="M13 1.2V7.7H19.5"/><path d="M6 17.5c2-3 3.5-6.5 3.5-9.5 0.5 3 2.5 6 5.5 7.5-3.5 0-6.5 0.5-9 2z" stroke-width="1"/><rect x="11.5" y="20" width="10" height="5.5" rx="2.75" transform="rotate(-45 16.5 22.75)"/><rect x="17" y="14.5" width="10" height="5.5" rx="2.75" transform="rotate(-45 22 17.25)"/></g></svg>
<div class="t" id="t64" style="left:1801.70px;top:100.84px;font-size:12px;font-weight:400;color:#3a3a3a;font-family:'Liberation Sans',sans-serif;transform:scaleX(0.9448);">Crie</div>
<div class="t" id="t65" style="left:1790.70px;top:116.84px;font-size:12px;font-weight:400;color:#3a3a3a;font-family:'Liberation Sans',sans-serif;transform:scaleX(0.9769);">um PDF</div>
<div class="t" id="t66" style="left:1773.70px;top:136.04px;font-size:12px;font-weight:400;color:#5c5c5c;font-family:'Liberation Sans',sans-serif;transform:scaleX(0.9742);">Adobe Acrobat</div>
<div style="position:absolute;left:1854.2px;top:62px;width:1px;height:83px;background:#d5d5d5"></div>
</div>
<div style="position:absolute;left:1603px;top:0;width:1296px;height:150px;overflow:hidden"><div style="position:absolute;left:-1603px;top:0;width:2899px;height:150px">
<svg style="position:absolute;left:1000.3px;top:64px;" width="30" height="33" viewBox="0 0 30 33"><rect x="1" y="5" width="24.5" height="24.5" rx="1.5" fill="#e8c27a"/><rect x="5" y="4.5" width="16.5" height="4" rx="1" fill="#6d6d6d"/><rect x="10" y="1.5" width="6.5" height="4" rx="1.2" fill="#6d6d6d"/><path d="M15.5 13.5h8l4.5 4.5v13.5h-12.5z" fill="#fff" stroke="#555"/><path d="M23.5 13.5v4.5h4.5" fill="none" stroke="#555"/></svg>
<div class="t" id="t67" style="left:999.50px;top:100.84px;font-size:12px;font-weight:400;color:#3a3a3a;font-family:'Liberation Sans',sans-serif;transform:scaleX(0.9691);">Colar</div>
<svg style="position:absolute;left:1010.3px;top:121.5px;" width="6" height="4" viewBox="0 0 6 4"><path d="M0 0H6L3 3.2z" fill="#595959"/></svg>
<svg style="position:absolute;left:1037.3px;top:64px;" width="16" height="16" viewBox="0 0 16 16"><path d="M4 1l7 10M12 1L5 11" stroke="#555" stroke-width="1.6"/><circle cx="4" cy="12.5" r="2.6" fill="none" stroke="#4a7fc1" stroke-width="1.3"/><circle cx="12" cy="12.5" r="2.6" fill="none" stroke="#4a7fc1" stroke-width="1.3"/></svg>
<div class="t" id="t68" style="left:1056.60px;top:66.84px;font-size:12px;font-weight:400;color:#3a3a3a;font-family:'Liberation Sans',sans-serif;transform:scaleX(0.9519);">Recortar</div>
<svg style="position:absolute;left:1036.3px;top:87px;" width="17" height="16" viewBox="0 0 17 16"><path d="M1.5 1.5H6.5L8.5 3.5V11.5H1.5Z" fill="#fff" stroke="#555"/><g fill="#3f7cc0"><rect x="2.5" y="4" width="3" height="1"/><rect x="2.5" y="6" width="3" height="1"/><rect x="2.5" y="8" width="3" height="1"/></g><path d="M7.5 5.5H13L15.5 8V14.5H7.5Z" fill="#fff" stroke="#555"/><g fill="#3f7cc0"><rect x="9" y="8" width="5" height="1"/><rect x="9" y="10" width="5" height="1"/><rect x="9" y="12" width="5" height="1"/></g></svg>
<div class="t" id="t69" style="left:1056.60px;top:90.14px;font-size:12px;font-weight:400;color:#3a3a3a;font-family:'Liberation Sans',sans-serif;transform:scaleX(0.9814);">Copiar</div>
<svg style="position:absolute;left:1101.6px;top:96px;" width="6" height="4" viewBox="0 0 6 4"><path d="M0 0H6L3 3.2z" fill="#595959"/></svg>
<svg style="position:absolute;left:1036.3px;top:109px;" width="18" height="17" viewBox="0 0 18 17"><path d="M0.5 12L6.5 7.5L11 12L6 16.5Z" fill="#e8c27a"/><path d="M6.5 7.5L10.5 3.5L15 8L11 12Z" fill="#6d6d6d"/><path d="M12 5L15.5 1.5L17.5 3.5L14 7Z" fill="#6d6d6d"/></svg>
<div class="t" id="t70" style="left:1056.60px;top:112.94px;font-size:12px;font-weight:400;color:#3a3a3a;font-family:'Liberation Sans',sans-serif;transform:scaleX(0.9697);">Pincel de Formatação</div>
<div class="t" id="t71" style="left:1021.00px;top:136.04px;font-size:12px;font-weight:400;color:#5c5c5c;font-family:'Liberation Sans',sans-serif;transform:scaleX(0.9324);">Área de Transferência</div>
<svg style="position:absolute;left:1170.3px;top:139px;" width="8" height="8" viewBox="0 0 8 8"><path d="M0.5 7.5V0.5H7.5" fill="none" stroke="#8a8a8a"/><path d="M2.5 2.5L7 7M7 3.5V7H3.5" fill="none" stroke="#777"/></svg>
<div style="position:absolute;left:1181.8px;top:62px;width:1px;height:83px;background:#d5d5d5"></div>
<div style="position:absolute;left:1186.3px;top:69px;width:111px;height:23px;background:#fff;box-sizing:border-box;border:1px solid #c6c6c6"></div>
<div class="t" id="t72" style="left:1189.50px;top:74.54px;font-size:12px;font-weight:400;color:#3a3a3a;font-family:'Liberation Sans',sans-serif;transform:scaleX(0.9937);">Calibri</div>
<svg style="position:absolute;left:1287.3px;top:79px;" width="6" height="4" viewBox="0 0 6 4"><path d="M0 0H6L3 3.2z" fill="#595959"/></svg>
<div style="position:absolute;left:1296.8px;top:69px;width:43px;height:23px;background:#fff;box-sizing:border-box;border:1px solid #c6c6c6"></div>
<div class="t" id="t73" style="left:1300.50px;top:74.54px;font-size:12px;font-weight:400;color:#3a3a3a;font-family:'Liberation Sans',sans-serif;transform:scaleX(0.9223);">11</div>
<svg style="position:absolute;left:1330.3px;top:79px;" width="6" height="4" viewBox="0 0 6 4"><path d="M0 0H6L3 3.2z" fill="#595959"/></svg>
<div class="t" id="t74" style="left:1345.80px;top:74.45px;font-size:14px;font-weight:400;color:#444;font-family:'Liberation Sans',sans-serif;transform:scaleX(1.1237);">A</div>
<svg style="position:absolute;left:1354.3px;top:72px;" width="6" height="4" viewBox="0 0 6 4"><path d="M0 3.5L3 0 6 3.5z" fill="#4a7fc1"/></svg>
<div class="t" id="t75" style="left:1369.30px;top:76.99px;font-size:11px;font-weight:400;color:#444;font-family:'Liberation Sans',sans-serif;transform:scaleX(1.0894);">A</div>
<svg style="position:absolute;left:1375.8px;top:72px;" width="6" height="4" viewBox="0 0 6 4"><path d="M0 0H6L3 3.5z" fill="#4a7fc1"/></svg>
<div class="t" id="t76" style="left:1192.30px;top:104.62px;font-size:12.5px;font-weight:700;color:#444;font-family:'Liberation Sans',sans-serif;transform:scaleX(1.0408);">N</div>
<div class="t" id="t77" style="left:1214.80px;top:103.77px;font-size:13.5px;font-weight:700;color:#444;font-family:'Liberation Serif',sans-serif;transform:scaleX(1.4243);font-style:italic;">I</div>
<div class="t" id="t78" style="left:1237.30px;top:104.62px;font-size:12.5px;font-weight:700;color:#444;font-family:'Liberation Sans',sans-serif;transform:scaleX(0.9228);">S</div>
<div style="position:absolute;left:1237.3px;top:117px;width:8px;height:1.2px;background:#444"></div>
<svg style="position:absolute;left:1255.3px;top:110px;" width="6" height="4" viewBox="0 0 6 4"><path d="M0 0H6L3 3.2z" fill="#595959"/></svg>
<div style="position:absolute;left:1268.8px;top:100px;width:1px;height:22px;background:#d5d5d5"></div>
<svg style="position:absolute;left:1277.3px;top:104px;" width="14" height="15" viewBox="0 0 14 15"><g fill="#666"><rect x="0" y="0" width="1" height="1"/><rect x="2" y="0" width="1" height="1"/><rect x="4" y="0" width="1" height="1"/><rect x="6" y="0" width="1" height="1"/><rect x="8" y="0" width="1" height="1"/><rect x="10" y="0" width="1" height="1"/><rect x="12" y="0" width="1" height="1"/><rect x="0" y="2" width="1" height="1"/><rect x="0" y="4" width="1" height="1"/><rect x="0" y="6" width="1" height="1"/><rect x="0" y="8" width="1" height="1"/><rect x="0" y="10" width="1" height="1"/><rect x="12" y="2" width="1" height="1"/><rect x="12" y="4" width="1" height="1"/><rect x="12" y="6" width="1" height="1"/><rect x="12" y="8" width="1" height="1"/><rect x="12" y="10" width="1" height="1"/><rect x="6" y="2" width="1" height="1"/><rect x="6" y="4" width="1" height="1"/><rect x="6" y="8" width="1" height="1"/><rect x="6" y="10" width="1" height="1"/><rect x="2" y="6" width="1" height="1"/><rect x="4" y="6" width="1" height="1"/><rect x="8" y="6" width="1" height="1"/><rect x="10" y="6" width="1" height="1"/></g><rect x="0" y="12.5" width="13" height="1.3" fill="#555"/></svg>
<svg style="position:absolute;left:1298.3px;top:110px;" width="6" height="4" viewBox="0 0 6 4"><path d="M0 0H6L3 3.2z" fill="#595959"/></svg>
<div style="position:absolute;left:1311.8px;top:100px;width:1px;height:22px;background:#d5d5d5"></div>
<svg style="position:absolute;left:1319.3px;top:102px;" width="17" height="17" viewBox="0 0 17 17"><path d="M2.5 8l5.5-5.5 5.5 5.5-5.5 5.5z" fill="#fff" stroke="#444" stroke-width="1.1"/><path d="M7 1.5v5" stroke="#444" stroke-width="1.1"/><rect x="6" y="0.5" width="2.5" height="2" fill="none" stroke="#444" stroke-width="0.9"/><path d="M13.5 6c2 1.5 2 3.5 0.3 6" fill="none" stroke="#3f7cc0" stroke-width="1.8"/><rect x="0" y="13" width="16" height="4" fill="#ffff00"/></svg>
<svg style="position:absolute;left:1341.3px;top:110px;" width="6" height="4" viewBox="0 0 6 4"><path d="M0 0H6L3 3.2z" fill="#595959"/></svg>
<svg style="position:absolute;left:1353.3px;top:104px;" width="17" height="15" viewBox="0 0 17 15"><path d="M3 11L8 0.8h1.2L14 11M5 7.3h7" fill="none" stroke="#444" stroke-width="2"/><rect x="0" y="11" width="16" height="4" fill="#ff0000"/></svg>
<svg style="position:absolute;left:1374.8px;top:110px;" width="6" height="4" viewBox="0 0 6 4"><path d="M0 0H6L3 3.2z" fill="#595959"/></svg>
<div class="t" id="t79" style="left:1262.80px;top:136.04px;font-size:12px;font-weight:400;color:#5c5c5c;font-family:'Liberation Sans',sans-serif;transform:scaleX(0.9548);">Fonte</div>
<svg style="position:absolute;left:1376.8px;top:139px;" width="8" height="8" viewBox="0 0 8 8"><path d="M0.5 7.5V0.5H7.5" fill="none" stroke="#8a8a8a"/><path d="M2.5 2.5L7 7M7 3.5V7H3.5" fill="none" stroke="#777"/></svg>
<div style="position:absolute;left:1388.3px;top:62px;width:1px;height:83px;background:#d5d5d5"></div>
<svg style="position:absolute;left:1397.3px;top:70px;" width="16" height="20" viewBox="0 0 16 20"><rect x="0" y="2" width="14" height="1" fill="#666"/><rect x="0" y="5" width="14" height="1" fill="#666"/><rect x="0" y="8" width="14" height="1" fill="#666"/></svg>
<svg style="position:absolute;left:1419.3px;top:70px;" width="16" height="20" viewBox="0 0 16 20"><rect x="0" y="6" width="14" height="1" fill="#666"/><rect x="0" y="9" width="14" height="1" fill="#666"/><rect x="0" y="12" width="14" height="1" fill="#666"/></svg>
<div style="position:absolute;left:1437.3px;top:69px;width:22px;height:23px;background:#c5c5c5"></div>
<svg style="position:absolute;left:1441.3px;top:70px;" width="16" height="20" viewBox="0 0 16 20"><rect x="0" y="11" width="14" height="1" fill="#666"/><rect x="0" y="14" width="14" height="1" fill="#666"/><rect x="0" y="17" width="14" height="1" fill="#666"/></svg>
<svg style="position:absolute;left:1471.3px;top:71px;" width="18" height="17" viewBox="0 0 18 17"><text x="0" y="0" font-size="10" fill="#555" font-family="Liberation Sans" transform="translate(4.5 13) rotate(-58)">ab</text><path d="M6.5 15.5L16 6.5M12.5 6.3H16.2V10" fill="none" stroke="#555" stroke-width="1.2"/></svg>
<svg style="position:absolute;left:1491.3px;top:79px;" width="6" height="4" viewBox="0 0 6 4"><path d="M0 0H6L3 3.2z" fill="#595959"/></svg>
<div style="position:absolute;left:1463.9px;top:69px;width:1px;height:22px;background:#d5d5d5"></div>
<div style="position:absolute;left:1517.1px;top:69px;width:1px;height:53px;background:#d5d5d5"></div>
<svg style="position:absolute;left:1523.3px;top:71px;" width="18" height="16" viewBox="0 0 18 16"><rect x="1.5" y="1.5" width="9" height="3" fill="none" stroke="#666"/><path d="M3 3h11" stroke="#3f7cc0" stroke-width="1.2"/><rect x="1.5" y="6.5" width="9" height="8" fill="none" stroke="#666"/><path d="M3 9.5h6M3 12h6" stroke="#3f7cc0"/><path d="M14 3c3 0 3.5 6-1 6h-2M12.8 7l-2 2 2 2" fill="none" stroke="#3f7cc0" stroke-width="1.3"/></svg>
<div class="t" id="t80" style="left:1599.10px;top:74.54px;font-size:12px;font-weight:400;color:#3a3a3a;font-family:'Liberation Sans',sans-serif;transform:scaleX(1.0458);">xto Automaticamente</div>
<svg style="position:absolute;left:1397.3px;top:104px;" width="16" height="20" viewBox="0 0 16 20"><rect x="0" y="2" width="14" height="1" fill="#666"/><rect x="0" y="5" width="14" height="1" fill="#666"/><rect x="0" y="8" width="14" height="1" fill="#666"/><rect x="0" y="11" width="10" height="1" fill="#666"/></svg>
<svg style="position:absolute;left:1419.3px;top:104px;" width="16" height="20" viewBox="0 0 16 20"><rect x="0" y="2" width="14" height="1" fill="#666"/><rect x="1.5" y="5" width="11" height="1" fill="#666"/><rect x="0" y="8" width="14" height="1" fill="#666"/><rect x="1.5" y="11" width="11" height="1" fill="#666"/></svg>
<svg style="position:absolute;left:1441.3px;top:104px;" width="16" height="20" viewBox="0 0 16 20"><rect x="0" y="2" width="14" height="1" fill="#666"/><rect x="0" y="5" width="14" height="1" fill="#666"/><rect x="0" y="8" width="14" height="1" fill="#666"/><rect x="4" y="11" width="10" height="1" fill="#666"/></svg>
<div style="position:absolute;left:1463.9px;top:100px;width:1px;height:22px;background:#d5d5d5"></div>
<svg style="position:absolute;left:1471.3px;top:104px;" width="17" height="14" viewBox="0 0 17 14"><path d="M0 1.5h16M8 5.5h8M8 8.5h8M0 12.5h16" stroke="#666"/><path d="M6.5 7H1.5M4 4.5L1.5 7 4 9.5" fill="none" stroke="#3f7cc0" stroke-width="1.8"/></svg>
<svg style="position:absolute;left:1493.3px;top:104px;" width="17" height="14" viewBox="0 0 17 14"><path d="M0 1.5h16M8 5.5h8M8 8.5h8M0 12.5h16" stroke="#666"/><path d="M0.5 7h5.5M3.5 4.5L6 7 3.5 9.5" fill="none" stroke="#3f7cc0" stroke-width="1.8"/></svg>
<svg style="position:absolute;left:1524.3px;top:103px;" width="16" height="16" viewBox="0 0 16 16"><rect x="0.5" y="0.5" width="14" height="14" fill="#fff" stroke="#666"/><path d="M0.5 4.5h14M0.5 11.5h14M7.5 0.5v4M7.5 11.5v3" stroke="#666"/><path d="M2.5 8h10M4.5 6L2.5 8 4.5 10M10.5 6L12.5 8 10.5 10" fill="none" stroke="#3f7cc0"/></svg>
<div class="t" id="t81" style="left:1543.30px;top:105.64px;font-size:12px;font-weight:400;color:#3a3a3a;font-family:'Liberation Sans',sans-serif;transform:scaleX(0.9596);">Mesclar e Centralizar</div>
<svg style="position:absolute;left:1662.3px;top:111px;" width="6" height="4" viewBox="0 0 6 4"><path d="M0 0H6L3 3.2z" fill="#595959"/></svg>
<div class="t" id="t82" style="left:1517.60px;top:136.04px;font-size:12px;font-weight:400;color:#5c5c5c;font-family:'Liberation Sans',sans-serif;transform:scaleX(0.9742);">Alinhamento</div>
<svg style="position:absolute;left:1716.3px;top:139px;" width="8" height="8" viewBox="0 0 8 8"><path d="M0.5 7.5V0.5H7.5" fill="none" stroke="#8a8a8a"/><path d="M2.5 2.5L7 7M7 3.5V7H3.5" fill="none" stroke="#777"/></svg>
<div style="position:absolute;left:1727.3px;top:62px;width:1px;height:83px;background:#d5d5d5"></div>
<div style="position:absolute;left:1732.3px;top:69px;width:131px;height:23px;background:#fff;box-sizing:border-box;border:1px solid #c6c6c6"></div>
<div class="t" id="t83" style="left:1735.60px;top:74.54px;font-size:12px;font-weight:400;color:#3a3a3a;font-family:'Liberation Sans',sans-serif;transform:scaleX(0.9201);">Geral</div>
<svg style="position:absolute;left:1853.3px;top:79px;" width="6" height="4" viewBox="0 0 6 4"><path d="M0 0H6L3 3.2z" fill="#595959"/></svg>
<svg style="position:absolute;left:1734.3px;top:102px;" width="18" height="19" viewBox="0 0 18 19"><rect x="0.5" y="0.5" width="16.5" height="9.5" fill="#3f7cc0"/><rect x="3" y="2" width="11.5" height="6.5" fill="#fff"/><circle cx="8" cy="5" r="2.2" fill="#3f7cc0"/><g fill="#e8b96a" stroke="#fff" stroke-width="0.6"><ellipse cx="12.5" cy="10.5" rx="4.3" ry="1.6"/><ellipse cx="12.5" cy="13" rx="4.3" ry="1.6"/><ellipse cx="8" cy="14.8" rx="4.3" ry="1.6"/><ellipse cx="8" cy="17.2" rx="4.3" ry="1.6"/></g></svg>
<svg style="position:absolute;left:1757.8px;top:110px;" width="6" height="4" viewBox="0 0 6 4"><path d="M0 0H6L3 3.2z" fill="#595959"/></svg>
<div class="t" id="t84" style="left:1771.60px;top:105.15px;font-size:14px;font-weight:400;color:#444;font-family:'Liberation Sans',sans-serif;transform:scaleX(0.9957);">%</div>
<div class="t" id="t85" style="left:1791.80px;top:105.61px;font-size:10.5px;font-weight:400;color:#333;font-family:'Liberation Sans',sans-serif;transform:scaleX(0.8556);">000</div>
<div style="position:absolute;left:1814.9px;top:100px;width:1px;height:22px;background:#d5d5d5"></div>
<svg style="position:absolute;left:1822.3px;top:103px;" width="16" height="15" viewBox="0 0 16 15"><text x="9.5" y="6.8" font-size="8.5" fill="#333" font-family="Liberation Sans">0</text><text x="2" y="14" font-size="8.5" fill="#333" font-family="Liberation Sans">,00</text><path d="M7.5 4.4H1.5M4 2L1.3 4.4 4 6.8" fill="none" stroke="#3f7cc0" stroke-width="1.6"/></svg>
<svg style="position:absolute;left:1844.3px;top:103px;" width="16" height="15" viewBox="0 0 16 15"><text x="2" y="6.8" font-size="8.5" fill="#333" font-family="Liberation Sans">,00</text><text x="7" y="14" font-size="8.5" fill="#333" font-family="Liberation Sans">,0</text><path d="M0.5 11.4h6M4 9L6.7 11.4 4 13.8" fill="none" stroke="#3f7cc0" stroke-width="1.6"/></svg>
<div class="t" id="t86" style="left:1769.60px;top:136.04px;font-size:12px;font-weight:400;color:#5c5c5c;font-family:'Liberation Sans',sans-serif;transform:scaleX(0.9464);">Número</div>
<svg style="position:absolute;left:1856.3px;top:139px;" width="8" height="8" viewBox="0 0 8 8"><path d="M0.5 7.5V0.5H7.5" fill="none" stroke="#8a8a8a"/><path d="M2.5 2.5L7 7M7 3.5V7H3.5" fill="none" stroke="#777"/></svg>
<div style="position:absolute;left:1867.6999999999998px;top:62px;width:1px;height:83px;background:#d5d5d5"></div>
<svg style="position:absolute;left:1896.3px;top:66px;" width="31" height="30" viewBox="0 0 31 30"><rect x="0.5" y="0.5" width="27" height="24" fill="#fff" stroke="#777"/><path d="M0.5 6.5h27M0.5 12.5h27M0.5 18.5h27M7.5 0.5v24M14.5 0.5v24M21.5 0.5v24" stroke="#999"/><rect x="8" y="1" width="6" height="5" fill="#e05a3a"/><rect x="8" y="7" width="13" height="5" fill="#4a7fc1"/><rect x="8" y="13" width="9" height="5" fill="#e05a3a"/><rect x="8" y="19" width="5" height="5" fill="#4a7fc1"/><rect x="15.5" y="15.5" width="14" height="13" fill="#fff" stroke="#555"/><path d="M18.5 20h8M18.5 23.5h8M24 18l-3 8" stroke="#333" stroke-width="1.1"/></svg>
<div class="t" id="t87" style="left:1879.50px;top:100.84px;font-size:12px;font-weight:400;color:#3a3a3a;font-family:'Liberation Sans',sans-serif;transform:scaleX(0.9776);">Formatação</div>
<div class="t" id="t88" style="left:1875.00px;top:116.84px;font-size:12px;font-weight:400;color:#3a3a3a;font-family:'Liberation Sans',sans-serif;">Condicional</div>
<svg style="position:absolute;left:1941.6px;top:122px;" width="6" height="4" viewBox="0 0 6 4"><path d="M0 0H6L3 3.2z" fill="#595959"/></svg>
<svg style="position:absolute;left:1978.3px;top:68px;" width="31" height="28" viewBox="0 0 31 28"><rect x="0.5" y="0.5" width="24" height="20" fill="#fff" stroke="#888"/><rect x="6" y="5" width="18" height="15" fill="#c5d9ee"/><path d="M0.5 5h24M0.5 10h24M0.5 15h24M6 0.5v20M12 0.5v20M18 0.5v20" stroke="#999"/><path d="M29 6L18 19" stroke="#666" stroke-width="4"/><path d="M19 17c-3 1-5 4-8 9 5-1 8-3 9-6z" fill="#4a7fc1"/></svg>
<div class="t" id="t89" style="left:1951.60px;top:100.84px;font-size:12px;font-weight:400;color:#3a3a3a;font-family:'Liberation Sans',sans-serif;transform:scaleX(0.9968);">Formatar como</div>
<div class="t" id="t90" style="left:1972.00px;top:116.84px;font-size:12px;font-weight:400;color:#3a3a3a;font-family:'Liberation Sans',sans-serif;transform:scaleX(0.9300);">Tabela</div>
<svg style="position:absolute;left:2008.6999999999998px;top:122px;" width="6" height="4" viewBox="0 0 6 4"><path d="M0 0H6L3 3.2z" fill="#595959"/></svg>
<div style="position:absolute;left:2037.3px;top:64px;width:335px;height:62px;background:#fff;box-sizing:border-box;border:1px solid #c6c6c6"></div>
<div style="position:absolute;left:2039.3px;top:67px;width:105px;height:27px;background:#fff;box-sizing:border-box;border:3px solid #c6c6c6"></div>
<div class="t" id="t91" style="left:2045.60px;top:73.74px;font-size:13.3px;font-weight:400;color:#000;font-family:'Liberation Sans',sans-serif;transform:scaleX(1.0616);">Normal</div>
<div style="position:absolute;left:2147.3px;top:70px;width:100px;height:22px;background:#c6efce"></div>
<div class="t" id="t92" style="left:2151.50px;top:73.74px;font-size:13.3px;font-weight:400;color:#006100;font-family:'Liberation Sans',sans-serif;">Bom</div>
<div style="position:absolute;left:2253.3px;top:70px;width:100px;height:22px;background:#ffc7ce"></div>
<div class="t" id="t93" style="left:2257.60px;top:73.74px;font-size:13.3px;font-weight:400;color:#9c0006;font-family:'Liberation Sans',sans-serif;transform:scaleX(1.0784);">Incorreto</div>
<div style="position:absolute;left:2041.3px;top:98px;width:100px;height:22px;background:#ffeb9c"></div>
<div class="t" id="t94" style="left:2045.60px;top:101.74px;font-size:13.3px;font-weight:400;color:#9c5700;font-family:'Liberation Sans',sans-serif;transform:scaleX(1.0521);">Neutra</div>
<div style="position:absolute;left:2147.3px;top:98px;width:100px;height:22px;background:#f2f2f2;box-sizing:border-box;border:1px solid #7f7f7f"></div>
<div class="t" id="t95" style="left:2151.50px;top:101.74px;font-size:13.3px;font-weight:700;color:#fa7d00;font-family:'Liberation Sans',sans-serif;transform:scaleX(0.9265);">Cálculo</div>
<div style="position:absolute;left:2253.3px;top:98px;width:100px;height:22px;background:#a5a5a5;box-sizing:border-box;border:3px double #3f3f3f"></div>
<div class="t" id="t96" style="left:2257.60px;top:101.74px;font-size:13.3px;font-weight:700;color:#fff;font-family:'Liberation Sans',sans-serif;">Célula de Ve...</div>
<div style="position:absolute;left:2357.3px;top:65px;width:14px;height:20px;background:#e6e6e6"></div>
<svg style="position:absolute;left:2360.3px;top:72px;" width="8" height="5" viewBox="0 0 8 5"><path d="M0 4.5L4 0.5 8 4.5z" fill="#c0c0c0"/></svg>
<div style="position:absolute;left:2357.3px;top:85px;width:14px;height:1px;background:#d5d5d5"></div>
<div style="position:absolute;left:2357.3px;top:104px;width:14px;height:1px;background:#d5d5d5"></div>
<div style="position:absolute;left:2356.3px;top:64px;width:1px;height:62px;background:#d5d5d5"></div>
<svg style="position:absolute;left:2360.3px;top:93px;" width="8" height="5" viewBox="0 0 8 5"><path d="M0 0.5H8L4 4.5z" fill="#666"/></svg>
<svg style="position:absolute;left:2360.3px;top:111px;" width="8" height="8" viewBox="0 0 8 8"><rect x="0" y="0" width="8" height="1.2" fill="#666"/><path d="M0 3H8L4 7z" fill="#666"/></svg>
<div class="t" id="t97" style="left:2109.60px;top:136.04px;font-size:12px;font-weight:400;color:#5c5c5c;font-family:'Liberation Sans',sans-serif;transform:scaleX(0.9201);">Estilo</div>
<div style="position:absolute;left:2379.7px;top:62px;width:1px;height:83px;background:#d5d5d5"></div>
<svg style="position:absolute;left:2391.3px;top:65px;" width="28" height="29" viewBox="0 0 28 29"><g fill="#fff" stroke="#6e6e6e"><rect x="1.5" y="1.5" width="7" height="5"/><rect x="8.5" y="1.5" width="7" height="5"/><rect x="1.5" y="17.5" width="7" height="5"/><rect x="8.5" y="17.5" width="7" height="5"/><rect x="1.5" y="22.5" width="7" height="5"/><rect x="8.5" y="22.5" width="7" height="5"/></g><g fill="#c5d9ee" stroke="#6e6e6e"><rect x="12.5" y="9.5" width="7" height="5"/><rect x="19.5" y="9.5" width="7" height="5"/></g><path d="M9.5 12H3.5M6 9.3L3 12 6 14.7" fill="none" stroke="#3f7cc0" stroke-width="2"/></svg>
<div class="t" id="t98" style="left:2389.50px;top:100.84px;font-size:12px;font-weight:400;color:#3a3a3a;font-family:'Liberation Sans',sans-serif;transform:scaleX(0.9537);">Inserir</div>
<svg style="position:absolute;left:2402.3px;top:121.5px;" width="6" height="4" viewBox="0 0 6 4"><path d="M0 0H6L3 3.2z" fill="#595959"/></svg>
<svg style="position:absolute;left:2432.3px;top:65px;" width="31" height="30" viewBox="0 0 31 30"><g fill="#fff" stroke="#6e6e6e"><rect x="1.5" y="1.5" width="7" height="5"/><rect x="8.5" y="1.5" width="7" height="5"/><rect x="1.5" y="18.5" width="7" height="5"/><rect x="8.5" y="18.5" width="7" height="5"/><rect x="1.5" y="23.5" width="7" height="5"/><rect x="8.5" y="23.5" width="7" height="5"/></g><g fill="#c5d9ee" stroke="#6e6e6e"><rect x="7.5" y="9.5" width="5.5" height="5"/><rect x="13" y="9.5" width="5.5" height="5"/></g><path d="M16 6.5C20 9 25 14 29.5 19.5M29.5 6.5C24 9.5 19.5 14 16 19.5" fill="none" stroke="#e05a3a" stroke-width="2.4"/></svg>
<div class="t" id="t99" style="left:2429.50px;top:100.84px;font-size:12px;font-weight:400;color:#3a3a3a;font-family:'Liberation Sans',sans-serif;transform:scaleX(0.9551);">Excluir</div>
<svg style="position:absolute;left:2443.8999999999996px;top:121.5px;" width="6" height="4" viewBox="0 0 6 4"><path d="M0 0H6L3 3.2z" fill="#595959"/></svg>
<svg style="position:absolute;left:2479.3px;top:64px;" width="30" height="33" viewBox="0 0 30 33"><path d="M1.5 1v5M23.5 1v5M2 3.7h21M5 1.5L2 3.7 5 5.9M20 1.5L23 3.7 20 5.9" fill="none" stroke="#3f7cc0" stroke-width="1.1"/><rect x="1.5" y="7.5" width="27" height="20" fill="#fff" stroke="#6e6e6e"/><path d="M1.5 12.5h27M1.5 22.5h27M8.5 7.5v20M16.5 7.5v20M22.5 7.5v20" stroke="#a8a8a8"/><rect x="9" y="13" width="7" height="9" fill="#4a7fc1"/><path d="M1.5 27.5v4h7l1.5-2.5h7l2-1.5" fill="#fff" stroke="#6e6e6e"/></svg>
<div class="t" id="t100" style="left:2470.50px;top:100.84px;font-size:12px;font-weight:400;color:#3a3a3a;font-family:'Liberation Sans',sans-serif;transform:scaleX(0.9818);">Formatar</div>
<svg style="position:absolute;left:2492.3px;top:121.5px;" width="6" height="4" viewBox="0 0 6 4"><path d="M0 0H6L3 3.2z" fill="#595959"/></svg>
<div class="t" id="t101" style="left:2434.60px;top:136.04px;font-size:12px;font-weight:400;color:#5c5c5c;font-family:'Liberation Sans',sans-serif;transform:scaleX(0.8968);">Células</div>
<div style="position:absolute;left:2525.6px;top:62px;width:1px;height:83px;background:#d5d5d5"></div>
<div class="t" id="t102" style="left:2532.30px;top:62.92px;font-size:19px;font-weight:400;color:#444;font-family:'Liberation Sans',sans-serif;transform:scaleX(1.3617);">Σ</div>
<div class="t" id="t103" style="left:2552.60px;top:66.84px;font-size:12px;font-weight:400;color:#3a3a3a;font-family:'Liberation Sans',sans-serif;transform:scaleX(0.9920);">AutoSoma</div>
<svg style="position:absolute;left:2617.6px;top:73px;" width="6" height="4" viewBox="0 0 6 4"><path d="M0 0H6L3 3.2z" fill="#595959"/></svg>
<svg style="position:absolute;left:2533.3px;top:87px;" width="16" height="16" viewBox="0 0 16 16"><rect x="0.5" y="0.5" width="14" height="14" fill="#fff" stroke="#666"/><rect x="0.5" y="0.5" width="14" height="3" fill="#777"/><path d="M7.5 5v7M4.5 9l3 3 3-3" fill="none" stroke="#4a7fc1" stroke-width="1.6"/></svg>
<div class="t" id="t104" style="left:2552.60px;top:89.64px;font-size:12px;font-weight:400;color:#3a3a3a;font-family:'Liberation Sans',sans-serif;transform:scaleX(0.9643);">Preencher</div>
<svg style="position:absolute;left:2607.6px;top:95px;" width="6" height="4" viewBox="0 0 6 4"><path d="M0 0H6L3 3.2z" fill="#595959"/></svg>
<svg style="position:absolute;left:2533.3px;top:110px;" width="16" height="14" viewBox="0 0 16 14"><path d="M2 9l7-7 5 5-7 7H4z" fill="#e87b8e"/><path d="M4 13.5h11" stroke="#777"/></svg>
<div class="t" id="t105" style="left:2552.60px;top:112.34px;font-size:12px;font-weight:400;color:#3a3a3a;font-family:'Liberation Sans',sans-serif;transform:scaleX(1.0194);">Limpar</div>
<svg style="position:absolute;left:2592.0px;top:118px;" width="6" height="4" viewBox="0 0 6 4"><path d="M0 0H6L3 3.2z" fill="#595959"/></svg>
<div class="t" id="t106" style="left:2642.30px;top:67.30px;font-size:15px;font-weight:700;color:#4a7fc1;font-family:'Liberation Sans',sans-serif;transform:scaleX(0.9683);">A</div>
<div class="t" id="t107" style="left:2642.80px;top:80.30px;font-size:15px;font-weight:700;color:#9b59b6;font-family:'Liberation Sans',sans-serif;transform:scaleX(1.0358);">Z</div>
<svg style="position:absolute;left:2654.3px;top:73px;" width="17" height="16" viewBox="0 0 17 16"><path d="M0.5 0.5h16L10.5 7.5v8h-4v-8z" fill="#8a8a8a"/><path d="M7.5 8v6.5h2V8" fill="#fff"/></svg>
<div class="t" id="t108" style="left:2630.00px;top:100.84px;font-size:12px;font-weight:400;color:#3a3a3a;font-family:'Liberation Sans',sans-serif;transform:scaleX(0.9631);">Classificar</div>
<div class="t" id="t109" style="left:2633.30px;top:116.84px;font-size:12px;font-weight:400;color:#3a3a3a;font-family:'Liberation Sans',sans-serif;transform:scaleX(0.9564);">e Filtrar</div>
<svg style="position:absolute;left:2675.0px;top:122px;" width="6" height="4" viewBox="0 0 6 4"><path d="M0 0H6L3 3.2z" fill="#595959"/></svg>
<svg style="position:absolute;left:2704.3px;top:65px;" width="29" height="29" viewBox="0 0 29 29"><circle cx="18" cy="11" r="8.5" fill="#fff" stroke="#4a7fc1" stroke-width="3"/><path d="M12 17L3 26" stroke="#4a7fc1" stroke-width="4" stroke-linecap="round"/></svg>
<div class="t" id="t110" style="left:2692.10px;top:100.84px;font-size:12px;font-weight:400;color:#3a3a3a;font-family:'Liberation Sans',sans-serif;transform:scaleX(0.9460);">Localizar e</div>
<div class="t" id="t111" style="left:2687.70px;top:116.84px;font-size:12px;font-weight:400;color:#3a3a3a;font-family:'Liberation Sans',sans-serif;transform:scaleX(0.9576);">Selecionar</div>
<svg style="position:absolute;left:2744.7px;top:122px;" width="6" height="4" viewBox="0 0 6 4"><path d="M0 0H6L3 3.2z" fill="#595959"/></svg>
<div class="t" id="t112" style="left:2624.40px;top:136.04px;font-size:12px;font-weight:400;color:#5c5c5c;font-family:'Liberation Sans',sans-serif;transform:scaleX(0.9073);">Edição</div>
<div style="position:absolute;left:2757.6px;top:62px;width:1px;height:83px;background:#d5d5d5"></div>
<svg style="position:absolute;left:2789.3px;top:67px;" width="29" height="30" viewBox="0 0 29 30"><g fill="none" stroke="#4a7fc1" stroke-width="1.4"><path d="M13 1.2H1.5V24.5H11"/><path d="M13 1.2L19.5 7.7V14"/><path d="M13 1.2V7.7H19.5"/><path d="M6 17.5c2-3 3.5-6.5 3.5-9.5 0.5 3 2.5 6 5.5 7.5-3.5 0-6.5 0.5-9 2z" stroke-width="1"/><rect x="11.5" y="20" width="10" height="5.5" rx="2.75" transform="rotate(-45 16.5 22.75)"/><rect x="17" y="14.5" width="10" height="5.5" rx="2.75" transform="rotate(-45 22 17.25)"/></g></svg>
<div class="t" id="t113" style="left:2789.00px;top:100.84px;font-size:12px;font-weight:400;color:#3a3a3a;font-family:'Liberation Sans',sans-serif;transform:scaleX(0.9448);">Crie</div>
<div class="t" id="t114" style="left:2778.00px;top:116.84px;font-size:12px;font-weight:400;color:#3a3a3a;font-family:'Liberation Sans',sans-serif;transform:scaleX(0.9769);">um PDF</div>
<div class="t" id="t115" style="left:2761.00px;top:136.04px;font-size:12px;font-weight:400;color:#5c5c5c;font-family:'Liberation Sans',sans-serif;transform:scaleX(0.9742);">Adobe Acrobat</div>
<div style="position:absolute;left:2841.5px;top:62px;width:1px;height:83px;background:#d5d5d5"></div>
</div></div>
<svg style="position:absolute;left:2879px;top:139px;" width="10" height="7" viewBox="0 0 10 7"><path d="M1 6l4-4 4 4" fill="none" stroke="#555" stroke-width="1.3"/></svg>
<div style="position:absolute;left:6px;top:161px;width:102px;height:26px;background:#fff;box-sizing:border-box;border:1px solid #c6c6c6"></div>
<div class="t" id="t116" style="left:13.00px;top:167.74px;font-size:13.3px;font-weight:400;color:#333;font-family:'Liberation Sans',sans-serif;transform:scaleX(0.8529);">D5</div>
<svg style="position:absolute;left:93px;top:171px;" width="9" height="6" viewBox="0 0 9 6"><path d="M0.5 0.5h8l-4 4.5z" fill="#707070"/></svg>
<svg style="position:absolute;left:121.5px;top:168px;" width="2" height="12" viewBox="0 0 2 12"><g fill="#9a9a9a"><rect x="0" y="0.5" width="2" height="2"/><rect x="0" y="4.5" width="2" height="2"/><rect x="0" y="8.5" width="2" height="2"/></g></svg>
<div style="position:absolute;left:138px;top:161px;width:110px;height:26px;background:#fff;box-sizing:border-box;border:1px solid #c6c6c6"></div>
<svg style="position:absolute;left:151px;top:168px;" width="12" height="12" viewBox="0 0 12 12"><path d="M1 1l10 10M11 1L1 11" stroke="#b4b4b4" stroke-width="1.4"/></svg>
<svg style="position:absolute;left:186px;top:167px;" width="14" height="13" viewBox="0 0 14 13"><path d="M1.5 7l4 4L12.5 1.5" fill="none" stroke="#c0c0c0" stroke-width="2.4"/></svg>
<div class="t" id="t117" style="left:223.00px;top:167.15px;font-size:14px;font-weight:700;color:#555;font-family:'Liberation Serif',sans-serif;transform:scaleX(0.9853);font-style:italic;">fx</div>
<div style="position:absolute;left:251px;top:161px;width:2642px;height:66px;background:#fff;box-sizing:border-box;border:1px solid #c6c6c6"></div>
<div class="t" id="t118" style="left:262.90px;top:167.74px;font-size:13.3px;font-weight:400;color:#222;font-family:'Liberation Sans',sans-serif;transform:scaleX(0.9630);">4055</div>
<svg style="position:absolute;left:2880px;top:169px;" width="9" height="6" viewBox="0 0 9 6"><path d="M1 5l3.5-3.5 3.5 3.5" fill="none" stroke="#555" stroke-width="2"/></svg>
<div style="position:absolute;left:27px;top:257px;width:2850px;height:173px;background:#fff"></div>
<div style="position:absolute;left:1px;top:237px;width:26px;height:193px;background:#e6e6e6"></div>
<div style="position:absolute;left:513px;top:237px;width:54px;height:19px;background:#d2d2d2"></div>
<div style="position:absolute;left:1715px;top:237px;width:273px;height:19px;background:#9fd5b7"></div>
<div style="position:absolute;left:1px;top:338px;width:25px;height:19px;background:#d2d2d2"></div>
<div style="position:absolute;left:178px;top:257px;width:1px;height:173px;background:#d9d9d9"></div>
<div style="position:absolute;left:295px;top:257px;width:1px;height:173px;background:#d9d9d9"></div>
<div style="position:absolute;left:512px;top:257px;width:1px;height:173px;background:#d9d9d9"></div>
<div style="position:absolute;left:567px;top:257px;width:1px;height:173px;background:#d9d9d9"></div>
<div style="position:absolute;left:630px;top:257px;width:1px;height:173px;background:#d9d9d9"></div>
<div style="position:absolute;left:668px;top:257px;width:1px;height:173px;background:#d9d9d9"></div>
<div style="position:absolute;left:863px;top:257px;width:1px;height:173px;background:#d9d9d9"></div>
<div style="position:absolute;left:1013px;top:257px;width:1px;height:173px;background:#d9d9d9"></div>
<div style="position:absolute;left:1143px;top:257px;width:1px;height:173px;background:#d9d9d9"></div>
<div style="position:absolute;left:1306px;top:257px;width:1px;height:173px;background:#d9d9d9"></div>
<div style="position:absolute;left:1435px;top:257px;width:1px;height:173px;background:#d9d9d9"></div>
<div style="position:absolute;left:1512px;top:257px;width:1px;height:173px;background:#d9d9d9"></div>
<div style="position:absolute;left:1606px;top:257px;width:1px;height:173px;background:#d9d9d9"></div>
<div style="position:absolute;left:1714px;top:257px;width:1px;height:173px;background:#d9d9d9"></div>
<div style="position:absolute;left:1988px;top:257px;width:1px;height:173px;background:#d9d9d9"></div>
<div style="position:absolute;left:2117px;top:257px;width:1px;height:173px;background:#d9d9d9"></div>
<div style="position:absolute;left:2235px;top:257px;width:1px;height:173px;background:#d9d9d9"></div>
<div style="position:absolute;left:2371px;top:257px;width:1px;height:173px;background:#d9d9d9"></div>
<div style="position:absolute;left:2468px;top:257px;width:1px;height:173px;background:#d9d9d9"></div>
<div style="position:absolute;left:2583px;top:257px;width:1px;height:173px;background:#d9d9d9"></div>
<div style="position:absolute;left:2739px;top:257px;width:1px;height:173px;background:#d9d9d9"></div>
<div style="position:absolute;left:2852px;top:257px;width:1px;height:173px;background:#d9d9d9"></div>
<div style="position:absolute;left:27px;top:277px;width:2850px;height:1px;background:#d9d9d9"></div>
<div style="position:absolute;left:27px;top:297px;width:2850px;height:1px;background:#d9d9d9"></div>
<div style="position:absolute;left:27px;top:317px;width:2850px;height:1px;background:#d9d9d9"></div>
<div style="position:absolute;left:27px;top:337px;width:2850px;height:1px;background:#d9d9d9"></div>
<div style="position:absolute;left:27px;top:357px;width:2850px;height:1px;background:#d9d9d9"></div>
<div style="position:absolute;left:27px;top:377px;width:2850px;height:1px;background:#d9d9d9"></div>
<div style="position:absolute;left:27px;top:397px;width:2850px;height:1px;background:#d9d9d9"></div>
<div style="position:absolute;left:27px;top:417px;width:2850px;height:1px;background:#d9d9d9"></div>
<div style="position:absolute;left:178px;top:237px;width:1px;height:19px;background:linear-gradient(#e6e6e6,#bdbdbd 40%,#bdbdbd)"></div>
<div style="position:absolute;left:295px;top:237px;width:1px;height:19px;background:linear-gradient(#e6e6e6,#bdbdbd 40%,#bdbdbd)"></div>
<div style="position:absolute;left:512px;top:237px;width:1px;height:19px;background:linear-gradient(#e6e6e6,#bdbdbd 40%,#bdbdbd)"></div>
<div style="position:absolute;left:567px;top:237px;width:1px;height:19px;background:linear-gradient(#e6e6e6,#bdbdbd 40%,#bdbdbd)"></div>
<div style="position:absolute;left:630px;top:237px;width:1px;height:19px;background:linear-gradient(#e6e6e6,#bdbdbd 40%,#bdbdbd)"></div>
<div style="position:absolute;left:668px;top:237px;width:1px;height:19px;background:linear-gradient(#e6e6e6,#bdbdbd 40%,#bdbdbd)"></div>
<div style="position:absolute;left:863px;top:237px;width:1px;height:19px;background:linear-gradient(#e6e6e6,#bdbdbd 40%,#bdbdbd)"></div>
<div style="position:absolute;left:1013px;top:237px;width:1px;height:19px;background:linear-gradient(#e6e6e6,#bdbdbd 40%,#bdbdbd)"></div>
<div style="position:absolute;left:1143px;top:237px;width:1px;height:19px;background:linear-gradient(#e6e6e6,#bdbdbd 40%,#bdbdbd)"></div>
<div style="position:absolute;left:1306px;top:237px;width:1px;height:19px;background:linear-gradient(#e6e6e6,#bdbdbd 40%,#bdbdbd)"></div>
<div style="position:absolute;left:1435px;top:237px;width:1px;height:19px;background:linear-gradient(#e6e6e6,#bdbdbd 40%,#bdbdbd)"></div>
<div style="position:absolute;left:1512px;top:237px;width:1px;height:19px;background:linear-gradient(#e6e6e6,#bdbdbd 40%,#bdbdbd)"></div>
<div style="position:absolute;left:1606px;top:237px;width:1px;height:19px;background:linear-gradient(#e6e6e6,#bdbdbd 40%,#bdbdbd)"></div>
<div style="position:absolute;left:1714px;top:237px;width:1px;height:19px;background:linear-gradient(#e6e6e6,#bdbdbd 40%,#bdbdbd)"></div>
<div style="position:absolute;left:1988px;top:237px;width:1px;height:19px;background:linear-gradient(#e6e6e6,#bdbdbd 40%,#bdbdbd)"></div>
<div style="position:absolute;left:2117px;top:237px;width:1px;height:19px;background:linear-gradient(#e6e6e6,#bdbdbd 40%,#bdbdbd)"></div>
<div style="position:absolute;left:2235px;top:237px;width:1px;height:19px;background:linear-gradient(#e6e6e6,#bdbdbd 40%,#bdbdbd)"></div>
<div style="position:absolute;left:2371px;top:237px;width:1px;height:19px;background:linear-gradient(#e6e6e6,#bdbdbd 40%,#bdbdbd)"></div>
<div style="position:absolute;left:2468px;top:237px;width:1px;height:19px;background:linear-gradient(#e6e6e6,#bdbdbd 40%,#bdbdbd)"></div>
<div style="position:absolute;left:2583px;top:237px;width:1px;height:19px;background:linear-gradient(#e6e6e6,#bdbdbd 40%,#bdbdbd)"></div>
<div style="position:absolute;left:2739px;top:237px;width:1px;height:19px;background:linear-gradient(#e6e6e6,#bdbdbd 40%,#bdbdbd)"></div>
<div style="position:absolute;left:2852px;top:237px;width:1px;height:19px;background:linear-gradient(#e6e6e6,#bdbdbd 40%,#bdbdbd)"></div>
<div style="position:absolute;left:1px;top:277px;width:26px;height:1px;background:#c6c6c6"></div>
<div style="position:absolute;left:1px;top:297px;width:26px;height:1px;background:#c6c6c6"></div>
<div style="position:absolute;left:1px;top:317px;width:26px;height:1px;background:#c6c6c6"></div>
<div style="position:absolute;left:1px;top:337px;width:26px;height:1px;background:#c6c6c6"></div>
<div style="position:absolute;left:1px;top:357px;width:26px;height:1px;background:#c6c6c6"></div>
<div style="position:absolute;left:1px;top:377px;width:26px;height:1px;background:#c6c6c6"></div>
<div style="position:absolute;left:1px;top:397px;width:26px;height:1px;background:#c6c6c6"></div>
<div style="position:absolute;left:1px;top:417px;width:26px;height:1px;background:#c6c6c6"></div>
<div style="position:absolute;left:1px;top:256px;width:2876px;height:1px;background:#ababab"></div>
<div style="position:absolute;left:26px;top:237px;width:1px;height:193px;background:#ababab"></div>
<div style="position:absolute;left:2876px;top:256px;width:1px;height:174px;background:#ababab"></div>
<div style="position:absolute;left:512px;top:255px;width:56px;height:2px;background:#217346"></div>
<div style="position:absolute;left:25px;top:337px;width:2px;height:21px;background:#217346"></div>
<svg style="position:absolute;left:11px;top:241px;" width="13" height="13" viewBox="0 0 13 13"><path d="M12 0.5V12.5H0z" fill="#bdbdbd"/></svg>
<div class="t" id="t119" style="left:98.28px;top:240.74px;font-size:13.3px;font-weight:400;color:#262626;font-family:'Liberation Sans',sans-serif;transform:scaleX(0.9500);">A</div>
<div class="t" id="t120" style="left:232.78px;top:240.74px;font-size:13.3px;font-weight:400;color:#262626;font-family:'Liberation Sans',sans-serif;transform:scaleX(0.9500);">B</div>
<div class="t" id="t121" style="left:399.44px;top:240.74px;font-size:13.3px;font-weight:400;color:#262626;font-family:'Liberation Sans',sans-serif;transform:scaleX(0.9500);">C</div>
<div class="t" id="t122" style="left:535.44px;top:240.74px;font-size:13.3px;font-weight:400;color:#217346;font-family:'Liberation Sans',sans-serif;transform:scaleX(0.9500);">D</div>
<div class="t" id="t123" style="left:594.78px;top:240.74px;font-size:13.3px;font-weight:400;color:#262626;font-family:'Liberation Sans',sans-serif;transform:scaleX(0.9500);">E</div>
<div class="t" id="t124" style="left:645.64px;top:240.74px;font-size:13.3px;font-weight:400;color:#262626;font-family:'Liberation Sans',sans-serif;transform:scaleX(0.9500);">F</div>
<div class="t" id="t125" style="left:761.09px;top:240.74px;font-size:13.3px;font-weight:400;color:#262626;font-family:'Liberation Sans',sans-serif;transform:scaleX(0.9500);">G</div>
<div class="t" id="t126" style="left:933.94px;top:240.74px;font-size:13.3px;font-weight:400;color:#262626;font-family:'Liberation Sans',sans-serif;transform:scaleX(0.9500);">H</div>
<div class="t" id="t127" style="left:1076.74px;top:240.74px;font-size:13.3px;font-weight:400;color:#262626;font-family:'Liberation Sans',sans-serif;transform:scaleX(0.9500);">I</div>
<div class="t" id="t128" style="left:1221.84px;top:240.74px;font-size:13.3px;font-weight:400;color:#262626;font-family:'Liberation Sans',sans-serif;transform:scaleX(0.9500);">J</div>
<div class="t" id="t129" style="left:1366.78px;top:240.74px;font-size:13.3px;font-weight:400;color:#262626;font-family:'Liberation Sans',sans-serif;transform:scaleX(0.9500);">K</div>
<div class="t" id="t130" style="left:1470.48px;top:240.74px;font-size:13.3px;font-weight:400;color:#262626;font-family:'Liberation Sans',sans-serif;transform:scaleX(0.9500);">L</div>
<div class="t" id="t131" style="left:1554.24px;top:240.74px;font-size:13.3px;font-weight:400;color:#262626;font-family:'Liberation Sans',sans-serif;transform:scaleX(0.9500);">M</div>
<div class="t" id="t132" style="left:1655.94px;top:240.74px;font-size:13.3px;font-weight:400;color:#262626;font-family:'Liberation Sans',sans-serif;transform:scaleX(0.9500);">N</div>
<div class="t" id="t133" style="left:1846.59px;top:240.74px;font-size:13.3px;font-weight:400;color:#262626;font-family:'Liberation Sans',sans-serif;transform:scaleX(0.9500);">O</div>
<div class="t" id="t134" style="left:2048.78px;top:240.74px;font-size:13.3px;font-weight:400;color:#262626;font-family:'Liberation Sans',sans-serif;transform:scaleX(0.9500);">P</div>
<div class="t" id="t135" style="left:2171.59px;top:240.74px;font-size:13.3px;font-weight:400;color:#262626;font-family:'Liberation Sans',sans-serif;transform:scaleX(0.9500);">Q</div>
<div class="t" id="t136" style="left:2298.94px;top:240.74px;font-size:13.3px;font-weight:400;color:#262626;font-family:'Liberation Sans',sans-serif;transform:scaleX(0.9500);">R</div>
<div class="t" id="t137" style="left:2415.78px;top:240.74px;font-size:13.3px;font-weight:400;color:#262626;font-family:'Liberation Sans',sans-serif;transform:scaleX(0.9500);">S</div>
<div class="t" id="t138" style="left:2522.14px;top:240.74px;font-size:13.3px;font-weight:400;color:#262626;font-family:'Liberation Sans',sans-serif;transform:scaleX(0.9500);">T</div>
<div class="t" id="t139" style="left:2656.94px;top:240.74px;font-size:13.3px;font-weight:400;color:#262626;font-family:'Liberation Sans',sans-serif;transform:scaleX(0.9500);">U</div>
<div class="t" id="t140" style="left:2791.78px;top:240.74px;font-size:13.3px;font-weight:400;color:#262626;font-family:'Liberation Sans',sans-serif;transform:scaleX(0.9500);">V</div>
<div class="t" id="t141" style="left:9.98px;top:261.74px;font-size:13.3px;font-weight:400;color:#262626;font-family:'Liberation Sans',sans-serif;transform:scaleX(0.9500);">1</div>
<div class="t" id="t142" style="left:9.98px;top:281.74px;font-size:13.3px;font-weight:400;color:#262626;font-family:'Liberation Sans',sans-serif;transform:scaleX(0.9500);">2</div>
<div class="t" id="t143" style="left:9.98px;top:301.74px;font-size:13.3px;font-weight:400;color:#262626;font-family:'Liberation Sans',sans-serif;transform:scaleX(0.9500);">3</div>
<div class="t" id="t144" style="left:9.98px;top:321.74px;font-size:13.3px;font-weight:400;color:#262626;font-family:'Liberation Sans',sans-serif;transform:scaleX(0.9500);">4</div>
<div class="t" id="t145" style="left:9.98px;top:341.74px;font-size:13.3px;font-weight:400;color:#217346;font-family:'Liberation Sans',sans-serif;transform:scaleX(0.9500);">5</div>
<div class="t" id="t146" style="left:9.98px;top:361.74px;font-size:13.3px;font-weight:400;color:#262626;font-family:'Liberation Sans',sans-serif;transform:scaleX(0.9500);">6</div>
<div class="t" id="t147" style="left:9.98px;top:381.74px;font-size:13.3px;font-weight:400;color:#262626;font-family:'Liberation Sans',sans-serif;transform:scaleX(0.9500);">7</div>
<div class="t" id="t148" style="left:9.98px;top:401.74px;font-size:13.3px;font-weight:400;color:#262626;font-family:'Liberation Sans',sans-serif;transform:scaleX(0.9500);">8</div>
<div class="t" id="t149" style="left:9.98px;top:421.74px;font-size:13.3px;font-weight:400;color:#262626;font-family:'Liberation Sans',sans-serif;transform:scaleX(0.9500);">9</div>
<div class="t" id="t150" style="left:29.30px;top:260.98px;font-size:14.2px;font-weight:700;color:#000;font-family:'Liberation Sans',sans-serif;transform:scaleX(1.0083);">Unidade operacional</div>
<div class="t" id="t151" style="left:181.30px;top:260.98px;font-size:14.2px;font-weight:700;color:#000;font-family:'Liberation Sans',sans-serif;transform:scaleX(1.0090);">Unidade de loja</div>
<div class="t" id="t152" style="left:298.30px;top:260.98px;font-size:14.2px;font-weight:700;color:#000;font-family:'Liberation Sans',sans-serif;transform:scaleX(1.0206);">Tipo de pedido</div>
<div class="t" id="t153" style="left:515.30px;top:260.98px;font-size:14.2px;font-weight:700;color:#000;font-family:'Liberation Sans',sans-serif;transform:scaleX(0.9937);">Pedido</div>
<div class="t" id="t154" style="left:570.30px;top:260.98px;font-size:14.2px;font-weight:700;color:#000;font-family:'Liberation Sans',sans-serif;transform:scaleX(0.9871);">Cliente</div>
<div class="t" id="t155" style="left:633.30px;top:260.98px;font-size:14.2px;font-weight:700;color:#000;font-family:'Liberation Sans',sans-serif;transform:scaleX(0.9280);">Filial</div>
<div class="t" id="t156" style="left:671.30px;top:260.98px;font-size:14.2px;font-weight:700;color:#000;font-family:'Liberation Sans',sans-serif;transform:scaleX(0.9482);">Razão Social</div>
<div class="t" id="t157" style="left:866.30px;top:260.98px;font-size:14.2px;font-weight:700;color:#000;font-family:'Liberation Sans',sans-serif;transform:scaleX(1.0299);">Produto</div>
<div class="t" id="t158" style="left:1016.30px;top:260.98px;font-size:14.2px;font-weight:700;color:#000;font-family:'Liberation Sans',sans-serif;transform:scaleX(1.0084);">Custo do produto</div>
<div class="t" id="t159" style="left:1146.30px;top:260.98px;font-size:14.2px;font-weight:700;color:#000;font-family:'Liberation Sans',sans-serif;transform:scaleX(1.0436);">Valor final do produto</div>
<div class="t" id="t160" style="left:1309.30px;top:260.98px;font-size:14.2px;font-weight:700;color:#000;font-family:'Liberation Sans',sans-serif;transform:scaleX(1.0213);">Data de liberação</div>
<div class="t" id="t161" style="left:1438.30px;top:260.98px;font-size:14.2px;font-weight:700;color:#000;font-family:'Liberation Sans',sans-serif;transform:scaleX(1.0309);">Etiqueta</div>
<div class="t" id="t162" style="left:1515.30px;top:260.98px;font-size:14.2px;font-weight:700;color:#000;font-family:'Liberation Sans',sans-serif;transform:scaleX(0.9802);">Qt. Enviados</div>
<div class="t" id="t163" style="left:1609.30px;top:260.98px;font-size:14.2px;font-weight:700;color:#000;font-family:'Liberation Sans',sans-serif;transform:scaleX(1.0066);">Qt. Devolvidos</div>
<div class="t" id="t164" style="left:1717.30px;top:260.98px;font-size:14.2px;font-weight:700;color:#000;font-family:'Liberation Sans',sans-serif;transform:scaleX(0.9963);">Qt. Recebidos(Baixa por contingência)</div>
<div class="t" id="t165" style="left:1991.30px;top:260.98px;font-size:14.2px;font-weight:700;color:#000;font-family:'Liberation Sans',sans-serif;transform:scaleX(1.0129);">Data de digitação</div>
<div class="t" id="t166" style="left:2120.30px;top:260.98px;font-size:14.2px;font-weight:700;color:#000;font-family:'Liberation Sans',sans-serif;transform:scaleX(1.0333);">Data de entrega</div>
<div class="t" id="t167" style="left:2238.30px;top:260.98px;font-size:14.2px;font-weight:700;color:#000;font-family:'Liberation Sans',sans-serif;transform:scaleX(1.0177);">Data de devolução</div>
<div class="t" id="t168" style="left:2375.30px;top:260.98px;font-size:14.2px;font-weight:700;color:#000;font-family:'Liberation Sans',sans-serif;transform:scaleX(0.9680);">NF&#x27;s de saída</div>
<div class="t" id="t169" style="left:2471.30px;top:260.98px;font-size:14.2px;font-weight:700;color:#000;font-family:'Liberation Sans',sans-serif;transform:scaleX(1.0144);">NF&#x27;s de entrada</div>
<div class="t" id="t170" style="left:2586.30px;top:260.98px;font-size:14.2px;font-weight:700;color:#000;font-family:'Liberation Sans',sans-serif;transform:scaleX(0.9875);">Situação</div>
<div class="t" id="t171" style="left:2742.30px;top:260.98px;font-size:14.2px;font-weight:700;color:#000;font-family:'Liberation Sans',sans-serif;transform:scaleX(0.9487);">Status Remessa</div>
<div class="t" id="t172" style="left:29.30px;top:281.74px;font-size:13.3px;font-weight:400;color:#000;font-family:'Liberation Sans',sans-serif;transform:scaleX(0.9364);">1 - (01) LOEIL MATRIZ</div>
<div class="t" id="t173" style="left:181.30px;top:281.74px;font-size:13.3px;font-weight:400;color:#000;font-family:'Liberation Sans',sans-serif;transform:scaleX(0.9348);">2 - (02) LOEIL D&amp;D</div>
<div class="t" id="t174" style="left:298.30px;top:281.74px;font-size:13.3px;font-weight:400;color:#000;font-family:'Liberation Sans',sans-serif;transform:scaleX(0.9242);">PEDIDO DE DEMONSTRACAO(PM)</div>
<svg style="position:absolute;left:513px;top:278px;" width="6" height="6" viewBox="0 0 6 6"><path d="M0 0H5.3L0 5.3z" fill="#1e8a3a"/></svg>
<div class="t" id="t175" style="left:515.30px;top:281.74px;font-size:13.3px;font-weight:400;color:#000;font-family:'Liberation Sans',sans-serif;transform:scaleX(0.9461);">4054</div>
<svg style="position:absolute;left:568px;top:278px;" width="6" height="6" viewBox="0 0 6 6"><path d="M0 0H5.3L0 5.3z" fill="#1e8a3a"/></svg>
<div class="t" id="t176" style="left:570.30px;top:281.74px;font-size:13.3px;font-weight:400;color:#000;font-family:'Liberation Sans',sans-serif;transform:scaleX(0.9464);">30928078</div>
<svg style="position:absolute;left:631px;top:278px;" width="6" height="6" viewBox="0 0 6 6"><path d="M0 0H5.3L0 5.3z" fill="#1e8a3a"/></svg>
<div class="t" id="t177" style="left:633.30px;top:281.74px;font-size:13.3px;font-weight:400;color:#000;font-family:'Liberation Sans',sans-serif;transform:scaleX(0.9451);">2</div>
<div class="t" id="t178" style="left:671.30px;top:281.74px;font-size:13.3px;font-weight:400;color:#000;font-family:'Liberation Sans',sans-serif;transform:scaleX(0.9101);">LETICIA STUDIO 499</div>
<svg style="position:absolute;left:864px;top:278px;" width="6" height="6" viewBox="0 0 6 6"><path d="M0 0H5.3L0 5.3z" fill="#1e8a3a"/></svg>
<div class="t" id="t179" style="left:866.30px;top:281.74px;font-size:13.3px;font-weight:400;color:#000;font-family:'Liberation Sans',sans-serif;transform:scaleX(0.9465);">01040004906048217606</div>
<svg style="position:absolute;left:1014px;top:278px;" width="6" height="6" viewBox="0 0 6 6"><path d="M0 0H5.3L0 5.3z" fill="#1e8a3a"/></svg>
<div class="t" id="t180" style="left:1016.30px;top:281.74px;font-size:13.3px;font-weight:400;color:#000;font-family:'Liberation Sans',sans-serif;transform:scaleX(0.9564);">275,00</div>
<svg style="position:absolute;left:1144px;top:278px;" width="6" height="6" viewBox="0 0 6 6"><path d="M0 0H5.3L0 5.3z" fill="#1e8a3a"/></svg>
<div class="t" id="t181" style="left:1146.30px;top:281.74px;font-size:13.3px;font-weight:400;color:#000;font-family:'Liberation Sans',sans-serif;transform:scaleX(0.9620);">1.781,00</div>
<div class="t" id="t182" style="left:1309.30px;top:281.74px;font-size:13.3px;font-weight:400;color:#000;font-family:'Liberation Sans',sans-serif;transform:scaleX(0.9895);">08/04/26 09:37</div>
<svg style="position:absolute;left:1436px;top:278px;" width="6" height="6" viewBox="0 0 6 6"><path d="M0 0H5.3L0 5.3z" fill="#1e8a3a"/></svg>
<div class="t" id="t183" style="left:1438.30px;top:281.74px;font-size:13.3px;font-weight:400;color:#000;font-family:'Liberation Sans',sans-serif;transform:scaleX(0.9724);">2100011194</div>
<svg style="position:absolute;left:1513px;top:278px;" width="6" height="6" viewBox="0 0 6 6"><path d="M0 0H5.3L0 5.3z" fill="#1e8a3a"/></svg>
<div class="t" id="t184" style="left:1515.30px;top:281.74px;font-size:13.3px;font-weight:400;color:#000;font-family:'Liberation Sans',sans-serif;transform:scaleX(0.9564);">1.0000</div>
<svg style="position:absolute;left:1607px;top:278px;" width="6" height="6" viewBox="0 0 6 6"><path d="M0 0H5.3L0 5.3z" fill="#1e8a3a"/></svg>
<div class="t" id="t185" style="left:1609.30px;top:281.74px;font-size:13.3px;font-weight:400;color:#000;font-family:'Liberation Sans',sans-serif;transform:scaleX(0.9564);">1.0000</div>
<svg style="position:absolute;left:1715px;top:278px;" width="6" height="6" viewBox="0 0 6 6"><path d="M0 0H5.3L0 5.3z" fill="#1e8a3a"/></svg>
<div class="t" id="t186" style="left:1717.30px;top:281.74px;font-size:13.3px;font-weight:400;color:#000;font-family:'Liberation Sans',sans-serif;transform:scaleX(0.9564);">1.0000</div>
<div class="t" id="t187" style="left:1991.30px;top:281.74px;font-size:13.3px;font-weight:400;color:#000;font-family:'Liberation Sans',sans-serif;transform:scaleX(0.9895);">08/04/26 00:00</div>
<div class="t" id="t188" style="left:2120.30px;top:281.74px;font-size:13.3px;font-weight:400;color:#000;font-family:'Liberation Sans',sans-serif;transform:scaleX(0.9895);">20/04/26 00:00</div>
<div class="t" id="t189" style="left:2238.30px;top:281.74px;font-size:13.3px;font-weight:400;color:#000;font-family:'Liberation Sans',sans-serif;transform:scaleX(0.9895);">20/04/26 00:00</div>
<svg style="position:absolute;left:2372px;top:278px;" width="6" height="6" viewBox="0 0 6 6"><path d="M0 0H5.3L0 5.3z" fill="#1e8a3a"/></svg>
<div class="t" id="t190" style="left:2375.30px;top:281.74px;font-size:13.3px;font-weight:400;color:#000;font-family:'Liberation Sans',sans-serif;transform:scaleX(0.9463);">25336</div>
<svg style="position:absolute;left:2469px;top:278px;" width="6" height="6" viewBox="0 0 6 6"><path d="M0 0H5.3L0 5.3z" fill="#1e8a3a"/></svg>
<div class="t" id="t191" style="left:2471.30px;top:281.74px;font-size:13.3px;font-weight:400;color:#000;font-family:'Liberation Sans',sans-serif;transform:scaleX(0.9463);">25337</div>
<div class="t" id="t192" style="left:2586.30px;top:281.74px;font-size:13.3px;font-weight:400;color:#000;font-family:'Liberation Sans',sans-serif;">LF - Liberado Financeiro</div>
<div class="t" id="t193" style="left:2742.30px;top:281.74px;font-size:13.3px;font-weight:400;color:#33cc33;font-family:'Liberation Sans',sans-serif;transform:scaleX(1.0618);">Devolvido</div>
<div class="t" id="t194" style="left:29.30px;top:301.74px;font-size:13.3px;font-weight:400;color:#000;font-family:'Liberation Sans',sans-serif;transform:scaleX(0.9364);">1 - (01) LOEIL MATRIZ</div>
<div class="t" id="t195" style="left:181.30px;top:301.74px;font-size:13.3px;font-weight:400;color:#000;font-family:'Liberation Sans',sans-serif;transform:scaleX(0.9348);">2 - (02) LOEIL D&amp;D</div>
<div class="t" id="t196" style="left:298.30px;top:301.74px;font-size:13.3px;font-weight:400;color:#000;font-family:'Liberation Sans',sans-serif;transform:scaleX(0.9242);">PEDIDO DE DEMONSTRACAO(PM)</div>
<svg style="position:absolute;left:513px;top:298px;" width="6" height="6" viewBox="0 0 6 6"><path d="M0 0H5.3L0 5.3z" fill="#1e8a3a"/></svg>
<div class="t" id="t197" style="left:515.30px;top:301.74px;font-size:13.3px;font-weight:400;color:#000;font-family:'Liberation Sans',sans-serif;transform:scaleX(0.9461);">4054</div>
<svg style="position:absolute;left:568px;top:298px;" width="6" height="6" viewBox="0 0 6 6"><path d="M0 0H5.3L0 5.3z" fill="#1e8a3a"/></svg>
<div class="t" id="t198" style="left:570.30px;top:301.74px;font-size:13.3px;font-weight:400;color:#000;font-family:'Liberation Sans',sans-serif;transform:scaleX(0.9464);">30928078</div>
<svg style="position:absolute;left:631px;top:298px;" width="6" height="6" viewBox="0 0 6 6"><path d="M0 0H5.3L0 5.3z" fill="#1e8a3a"/></svg>
<div class="t" id="t199" style="left:633.30px;top:301.74px;font-size:13.3px;font-weight:400;color:#000;font-family:'Liberation Sans',sans-serif;transform:scaleX(0.9451);">2</div>
<div class="t" id="t200" style="left:671.30px;top:301.74px;font-size:13.3px;font-weight:400;color:#000;font-family:'Liberation Sans',sans-serif;transform:scaleX(0.9101);">LETICIA STUDIO 499</div>
<svg style="position:absolute;left:864px;top:298px;" width="6" height="6" viewBox="0 0 6 6"><path d="M0 0H5.3L0 5.3z" fill="#1e8a3a"/></svg>
<div class="t" id="t201" style="left:866.30px;top:301.74px;font-size:13.3px;font-weight:400;color:#000;font-family:'Liberation Sans',sans-serif;transform:scaleX(0.9465);">01040006564085104984</div>
<svg style="position:absolute;left:1014px;top:298px;" width="6" height="6" viewBox="0 0 6 6"><path d="M0 0H5.3L0 5.3z" fill="#1e8a3a"/></svg>
<div class="t" id="t202" style="left:1016.30px;top:301.74px;font-size:13.3px;font-weight:400;color:#000;font-family:'Liberation Sans',sans-serif;transform:scaleX(0.9564);">147,00</div>
<svg style="position:absolute;left:1144px;top:298px;" width="6" height="6" viewBox="0 0 6 6"><path d="M0 0H5.3L0 5.3z" fill="#1e8a3a"/></svg>
<div class="t" id="t203" style="left:1146.30px;top:301.74px;font-size:13.3px;font-weight:400;color:#000;font-family:'Liberation Sans',sans-serif;transform:scaleX(0.9564);">959,00</div>
<div class="t" id="t204" style="left:1309.30px;top:301.74px;font-size:13.3px;font-weight:400;color:#000;font-family:'Liberation Sans',sans-serif;transform:scaleX(0.9895);">08/04/26 09:37</div>
<svg style="position:absolute;left:1436px;top:298px;" width="6" height="6" viewBox="0 0 6 6"><path d="M0 0H5.3L0 5.3z" fill="#1e8a3a"/></svg>
<div class="t" id="t205" style="left:1438.30px;top:301.74px;font-size:13.3px;font-weight:400;color:#000;font-family:'Liberation Sans',sans-serif;transform:scaleX(0.9465);">2100015577</div>
<svg style="position:absolute;left:1513px;top:298px;" width="6" height="6" viewBox="0 0 6 6"><path d="M0 0H5.3L0 5.3z" fill="#1e8a3a"/></svg>
<div class="t" id="t206" style="left:1515.30px;top:301.74px;font-size:13.3px;font-weight:400;color:#000;font-family:'Liberation Sans',sans-serif;transform:scaleX(0.9564);">1.0000</div>
<svg style="position:absolute;left:1607px;top:298px;" width="6" height="6" viewBox="0 0 6 6"><path d="M0 0H5.3L0 5.3z" fill="#1e8a3a"/></svg>
<div class="t" id="t207" style="left:1609.30px;top:301.74px;font-size:13.3px;font-weight:400;color:#000;font-family:'Liberation Sans',sans-serif;transform:scaleX(0.9564);">1.0000</div>
<svg style="position:absolute;left:1715px;top:298px;" width="6" height="6" viewBox="0 0 6 6"><path d="M0 0H5.3L0 5.3z" fill="#1e8a3a"/></svg>
<div class="t" id="t208" style="left:1717.30px;top:301.74px;font-size:13.3px;font-weight:400;color:#000;font-family:'Liberation Sans',sans-serif;transform:scaleX(0.9564);">1.0000</div>
<div class="t" id="t209" style="left:1991.30px;top:301.74px;font-size:13.3px;font-weight:400;color:#000;font-family:'Liberation Sans',sans-serif;transform:scaleX(0.9895);">08/04/26 00:00</div>
<div class="t" id="t210" style="left:2120.30px;top:301.74px;font-size:13.3px;font-weight:400;color:#000;font-family:'Liberation Sans',sans-serif;transform:scaleX(0.9895);">20/04/26 00:00</div>
<div class="t" id="t211" style="left:2238.30px;top:301.74px;font-size:13.3px;font-weight:400;color:#000;font-family:'Liberation Sans',sans-serif;transform:scaleX(0.9895);">20/04/26 00:00</div>
<svg style="position:absolute;left:2372px;top:298px;" width="6" height="6" viewBox="0 0 6 6"><path d="M0 0H5.3L0 5.3z" fill="#1e8a3a"/></svg>
<div class="t" id="t212" style="left:2375.30px;top:301.74px;font-size:13.3px;font-weight:400;color:#000;font-family:'Liberation Sans',sans-serif;transform:scaleX(0.9463);">25336</div>
<svg style="position:absolute;left:2469px;top:298px;" width="6" height="6" viewBox="0 0 6 6"><path d="M0 0H5.3L0 5.3z" fill="#1e8a3a"/></svg>
<div class="t" id="t213" style="left:2471.30px;top:301.74px;font-size:13.3px;font-weight:400;color:#000;font-family:'Liberation Sans',sans-serif;transform:scaleX(0.9463);">25337</div>
<div class="t" id="t214" style="left:2586.30px;top:301.74px;font-size:13.3px;font-weight:400;color:#000;font-family:'Liberation Sans',sans-serif;">LF - Liberado Financeiro</div>
<div class="t" id="t215" style="left:2742.30px;top:301.74px;font-size:13.3px;font-weight:400;color:#33cc33;font-family:'Liberation Sans',sans-serif;transform:scaleX(1.0618);">Devolvido</div>
<div class="t" id="t216" style="left:29.30px;top:321.74px;font-size:13.3px;font-weight:400;color:#000;font-family:'Liberation Sans',sans-serif;transform:scaleX(0.9364);">1 - (01) LOEIL MATRIZ</div>
<div class="t" id="t217" style="left:181.30px;top:321.74px;font-size:13.3px;font-weight:400;color:#000;font-family:'Liberation Sans',sans-serif;transform:scaleX(0.9348);">2 - (02) LOEIL D&amp;D</div>
<div class="t" id="t218" style="left:298.30px;top:321.74px;font-size:13.3px;font-weight:400;color:#000;font-family:'Liberation Sans',sans-serif;transform:scaleX(0.9242);">PEDIDO DE DEMONSTRACAO(PM)</div>
<svg style="position:absolute;left:513px;top:318px;" width="6" height="6" viewBox="0 0 6 6"><path d="M0 0H5.3L0 5.3z" fill="#1e8a3a"/></svg>
<div class="t" id="t219" style="left:515.30px;top:321.74px;font-size:13.3px;font-weight:400;color:#000;font-family:'Liberation Sans',sans-serif;transform:scaleX(0.9461);">4055</div>
<svg style="position:absolute;left:568px;top:318px;" width="6" height="6" viewBox="0 0 6 6"><path d="M0 0H5.3L0 5.3z" fill="#1e8a3a"/></svg>
<div class="t" id="t220" style="left:570.30px;top:321.74px;font-size:13.3px;font-weight:400;color:#000;font-family:'Liberation Sans',sans-serif;transform:scaleX(0.9464);">30928078</div>
<svg style="position:absolute;left:631px;top:318px;" width="6" height="6" viewBox="0 0 6 6"><path d="M0 0H5.3L0 5.3z" fill="#1e8a3a"/></svg>
<div class="t" id="t221" style="left:633.30px;top:321.74px;font-size:13.3px;font-weight:400;color:#000;font-family:'Liberation Sans',sans-serif;transform:scaleX(0.9451);">2</div>
<div class="t" id="t222" style="left:671.30px;top:321.74px;font-size:13.3px;font-weight:400;color:#000;font-family:'Liberation Sans',sans-serif;transform:scaleX(0.9101);">LETICIA STUDIO 499</div>
<svg style="position:absolute;left:864px;top:318px;" width="6" height="6" viewBox="0 0 6 6"><path d="M0 0H5.3L0 5.3z" fill="#1e8a3a"/></svg>
<div class="t" id="t223" style="left:866.30px;top:321.74px;font-size:13.3px;font-weight:400;color:#000;font-family:'Liberation Sans',sans-serif;transform:scaleX(0.9465);">01040014314015057180</div>
<svg style="position:absolute;left:1014px;top:318px;" width="6" height="6" viewBox="0 0 6 6"><path d="M0 0H5.3L0 5.3z" fill="#1e8a3a"/></svg>
<div class="t" id="t224" style="left:1016.30px;top:321.74px;font-size:13.3px;font-weight:400;color:#000;font-family:'Liberation Sans',sans-serif;transform:scaleX(0.9564);">265,00</div>
<svg style="position:absolute;left:1144px;top:318px;" width="6" height="6" viewBox="0 0 6 6"><path d="M0 0H5.3L0 5.3z" fill="#1e8a3a"/></svg>
<div class="t" id="t225" style="left:1146.30px;top:321.74px;font-size:13.3px;font-weight:400;color:#000;font-family:'Liberation Sans',sans-serif;transform:scaleX(0.9620);">1.739,00</div>
<div class="t" id="t226" style="left:1309.30px;top:321.74px;font-size:13.3px;font-weight:400;color:#000;font-family:'Liberation Sans',sans-serif;transform:scaleX(0.9895);">08/04/26 10:30</div>
<svg style="position:absolute;left:1436px;top:318px;" width="6" height="6" viewBox="0 0 6 6"><path d="M0 0H5.3L0 5.3z" fill="#1e8a3a"/></svg>
<div class="t" id="t227" style="left:1438.30px;top:321.74px;font-size:13.3px;font-weight:400;color:#000;font-family:'Liberation Sans',sans-serif;transform:scaleX(0.9593);">2500011295</div>
<svg style="position:absolute;left:1513px;top:318px;" width="6" height="6" viewBox="0 0 6 6"><path d="M0 0H5.3L0 5.3z" fill="#1e8a3a"/></svg>
<div class="t" id="t228" style="left:1515.30px;top:321.74px;font-size:13.3px;font-weight:400;color:#000;font-family:'Liberation Sans',sans-serif;transform:scaleX(0.9564);">1.0000</div>
<svg style="position:absolute;left:1607px;top:318px;" width="6" height="6" viewBox="0 0 6 6"><path d="M0 0H5.3L0 5.3z" fill="#1e8a3a"/></svg>
<div class="t" id="t229" style="left:1609.30px;top:321.74px;font-size:13.3px;font-weight:400;color:#000;font-family:'Liberation Sans',sans-serif;transform:scaleX(0.9564);">1.0000</div>
<svg style="position:absolute;left:1715px;top:318px;" width="6" height="6" viewBox="0 0 6 6"><path d="M0 0H5.3L0 5.3z" fill="#1e8a3a"/></svg>
<div class="t" id="t230" style="left:1717.30px;top:321.74px;font-size:13.3px;font-weight:400;color:#000;font-family:'Liberation Sans',sans-serif;transform:scaleX(0.9564);">1.0000</div>
<div class="t" id="t231" style="left:1991.30px;top:321.74px;font-size:13.3px;font-weight:400;color:#000;font-family:'Liberation Sans',sans-serif;transform:scaleX(0.9895);">08/04/26 00:00</div>
<div class="t" id="t232" style="left:2120.30px;top:321.74px;font-size:13.3px;font-weight:400;color:#000;font-family:'Liberation Sans',sans-serif;transform:scaleX(0.9895);">20/04/26 00:00</div>
<div class="t" id="t233" style="left:2238.30px;top:321.74px;font-size:13.3px;font-weight:400;color:#000;font-family:'Liberation Sans',sans-serif;transform:scaleX(0.9895);">20/04/26 00:00</div>
<svg style="position:absolute;left:2372px;top:318px;" width="6" height="6" viewBox="0 0 6 6"><path d="M0 0H5.3L0 5.3z" fill="#1e8a3a"/></svg>
<div class="t" id="t234" style="left:2375.30px;top:321.74px;font-size:13.3px;font-weight:400;color:#000;font-family:'Liberation Sans',sans-serif;transform:scaleX(0.9463);">25339</div>
<svg style="position:absolute;left:2469px;top:318px;" width="6" height="6" viewBox="0 0 6 6"><path d="M0 0H5.3L0 5.3z" fill="#1e8a3a"/></svg>
<div class="t" id="t235" style="left:2471.30px;top:321.74px;font-size:13.3px;font-weight:400;color:#000;font-family:'Liberation Sans',sans-serif;transform:scaleX(0.9463);">25340</div>
<div class="t" id="t236" style="left:2586.30px;top:321.74px;font-size:13.3px;font-weight:400;color:#000;font-family:'Liberation Sans',sans-serif;">LF - Liberado Financeiro</div>
<div class="t" id="t237" style="left:2742.30px;top:321.74px;font-size:13.3px;font-weight:400;color:#33cc33;font-family:'Liberation Sans',sans-serif;transform:scaleX(1.0618);">Devolvido</div>
<div class="t" id="t238" style="left:29.30px;top:341.74px;font-size:13.3px;font-weight:400;color:#000;font-family:'Liberation Sans',sans-serif;transform:scaleX(0.9364);">1 - (01) LOEIL MATRIZ</div>
<div class="t" id="t239" style="left:181.30px;top:341.74px;font-size:13.3px;font-weight:400;color:#000;font-family:'Liberation Sans',sans-serif;transform:scaleX(0.9348);">2 - (02) LOEIL D&amp;D</div>
<div class="t" id="t240" style="left:298.30px;top:341.74px;font-size:13.3px;font-weight:400;color:#000;font-family:'Liberation Sans',sans-serif;transform:scaleX(0.9229);">PEDIDO DE DEMONSTRACAO(</div>
<svg style="position:absolute;left:513px;top:338px;" width="6" height="6" viewBox="0 0 6 6"><path d="M0 0H5.3L0 5.3z" fill="#1e8a3a"/></svg>
<div class="t" id="t241" style="left:515.30px;top:341.74px;font-size:13.3px;font-weight:400;color:#000;font-family:'Liberation Sans',sans-serif;transform:scaleX(0.9461);">4055</div>
<svg style="position:absolute;left:568px;top:338px;" width="6" height="6" viewBox="0 0 6 6"><path d="M0 0H5.3L0 5.3z" fill="#1e8a3a"/></svg>
<div class="t" id="t242" style="left:570.30px;top:341.74px;font-size:13.3px;font-weight:400;color:#000;font-family:'Liberation Sans',sans-serif;transform:scaleX(0.9464);">30928078</div>
<svg style="position:absolute;left:631px;top:338px;" width="6" height="6" viewBox="0 0 6 6"><path d="M0 0H5.3L0 5.3z" fill="#1e8a3a"/></svg>
<div class="t" id="t243" style="left:633.30px;top:341.74px;font-size:13.3px;font-weight:400;color:#000;font-family:'Liberation Sans',sans-serif;transform:scaleX(0.9451);">2</div>
<div class="t" id="t244" style="left:671.30px;top:341.74px;font-size:13.3px;font-weight:400;color:#000;font-family:'Liberation Sans',sans-serif;transform:scaleX(0.9101);">LETICIA STUDIO 499</div>
<svg style="position:absolute;left:864px;top:338px;" width="6" height="6" viewBox="0 0 6 6"><path d="M0 0H5.3L0 5.3z" fill="#1e8a3a"/></svg>
<div class="t" id="t245" style="left:866.30px;top:341.74px;font-size:13.3px;font-weight:400;color:#000;font-family:'Liberation Sans',sans-serif;transform:scaleX(0.9465);">01070012253040008769</div>
<svg style="position:absolute;left:1014px;top:338px;" width="6" height="6" viewBox="0 0 6 6"><path d="M0 0H5.3L0 5.3z" fill="#1e8a3a"/></svg>
<div class="t" id="t246" style="left:1016.30px;top:341.74px;font-size:13.3px;font-weight:400;color:#000;font-family:'Liberation Sans',sans-serif;transform:scaleX(0.9585);">88,00</div>
<svg style="position:absolute;left:1144px;top:338px;" width="6" height="6" viewBox="0 0 6 6"><path d="M0 0H5.3L0 5.3z" fill="#1e8a3a"/></svg>
<div class="t" id="t247" style="left:1146.30px;top:341.74px;font-size:13.3px;font-weight:400;color:#000;font-family:'Liberation Sans',sans-serif;transform:scaleX(0.9564);">555,00</div>
<div class="t" id="t248" style="left:1309.30px;top:341.74px;font-size:13.3px;font-weight:400;color:#000;font-family:'Liberation Sans',sans-serif;transform:scaleX(0.9895);">08/04/26 10:30</div>
<svg style="position:absolute;left:1436px;top:338px;" width="6" height="6" viewBox="0 0 6 6"><path d="M0 0H5.3L0 5.3z" fill="#1e8a3a"/></svg>
<div class="t" id="t249" style="left:1438.30px;top:341.74px;font-size:13.3px;font-weight:400;color:#000;font-family:'Liberation Sans',sans-serif;transform:scaleX(0.9465);">2300016467</div>
<svg style="position:absolute;left:1513px;top:338px;" width="6" height="6" viewBox="0 0 6 6"><path d="M0 0H5.3L0 5.3z" fill="#1e8a3a"/></svg>
<div class="t" id="t250" style="left:1515.30px;top:341.74px;font-size:13.3px;font-weight:400;color:#000;font-family:'Liberation Sans',sans-serif;transform:scaleX(0.9564);">1.0000</div>
<svg style="position:absolute;left:1607px;top:338px;" width="6" height="6" viewBox="0 0 6 6"><path d="M0 0H5.3L0 5.3z" fill="#1e8a3a"/></svg>
<div class="t" id="t251" style="left:1609.30px;top:341.74px;font-size:13.3px;font-weight:400;color:#000;font-family:'Liberation Sans',sans-serif;transform:scaleX(0.9564);">0.0000</div>
<svg style="position:absolute;left:1715px;top:338px;" width="6" height="6" viewBox="0 0 6 6"><path d="M0 0H5.3L0 5.3z" fill="#1e8a3a"/></svg>
<div class="t" id="t252" style="left:1717.30px;top:341.74px;font-size:13.3px;font-weight:400;color:#000;font-family:'Liberation Sans',sans-serif;transform:scaleX(0.9564);">0.0000</div>
<div class="t" id="t253" style="left:1991.30px;top:341.74px;font-size:13.3px;font-weight:400;color:#000;font-family:'Liberation Sans',sans-serif;transform:scaleX(0.9895);">08/04/26 00:00</div>
<div class="t" id="t254" style="left:2120.30px;top:341.74px;font-size:13.3px;font-weight:400;color:#000;font-family:'Liberation Sans',sans-serif;transform:scaleX(0.9895);">20/04/26 00:00</div>
<div class="t" id="t255" style="left:2238.30px;top:341.74px;font-size:13.3px;font-weight:400;color:#000;font-family:'Liberation Sans',sans-serif;transform:scaleX(0.9895);">20/04/26 00:00</div>
<svg style="position:absolute;left:2372px;top:338px;" width="6" height="6" viewBox="0 0 6 6"><path d="M0 0H5.3L0 5.3z" fill="#1e8a3a"/></svg>
<div class="t" id="t256" style="left:2375.30px;top:341.74px;font-size:13.3px;font-weight:400;color:#000;font-family:'Liberation Sans',sans-serif;transform:scaleX(0.9463);">25339</div>
<div class="t" id="t257" style="left:2586.30px;top:341.74px;font-size:13.3px;font-weight:400;color:#000;font-family:'Liberation Sans',sans-serif;">LF - Liberado Financeiro</div>
<div class="t" id="t258" style="left:2742.30px;top:341.74px;font-size:13.3px;font-weight:400;color:#e3323f;font-family:'Liberation Sans',sans-serif;transform:scaleX(1.0538);">Pendente</div>
<div class="t" id="t259" style="left:29.30px;top:361.74px;font-size:13.3px;font-weight:400;color:#000;font-family:'Liberation Sans',sans-serif;transform:scaleX(0.9364);">1 - (01) LOEIL MATRIZ</div>
<div class="t" id="t260" style="left:181.30px;top:361.74px;font-size:13.3px;font-weight:400;color:#000;font-family:'Liberation Sans',sans-serif;transform:scaleX(0.9348);">2 - (02) LOEIL D&amp;D</div>
<div class="t" id="t261" style="left:298.30px;top:361.74px;font-size:13.3px;font-weight:400;color:#000;font-family:'Liberation Sans',sans-serif;transform:scaleX(0.9242);">PEDIDO DE DEMONSTRACAO(PM)</div>
<svg style="position:absolute;left:513px;top:358px;" width="6" height="6" viewBox="0 0 6 6"><path d="M0 0H5.3L0 5.3z" fill="#1e8a3a"/></svg>
<div class="t" id="t262" style="left:515.30px;top:361.74px;font-size:13.3px;font-weight:400;color:#000;font-family:'Liberation Sans',sans-serif;transform:scaleX(0.9461);">4055</div>
<svg style="position:absolute;left:568px;top:358px;" width="6" height="6" viewBox="0 0 6 6"><path d="M0 0H5.3L0 5.3z" fill="#1e8a3a"/></svg>
<div class="t" id="t263" style="left:570.30px;top:361.74px;font-size:13.3px;font-weight:400;color:#000;font-family:'Liberation Sans',sans-serif;transform:scaleX(0.9464);">30928078</div>
<svg style="position:absolute;left:631px;top:358px;" width="6" height="6" viewBox="0 0 6 6"><path d="M0 0H5.3L0 5.3z" fill="#1e8a3a"/></svg>
<div class="t" id="t264" style="left:633.30px;top:361.74px;font-size:13.3px;font-weight:400;color:#000;font-family:'Liberation Sans',sans-serif;transform:scaleX(0.9451);">2</div>
<div class="t" id="t265" style="left:671.30px;top:361.74px;font-size:13.3px;font-weight:400;color:#000;font-family:'Liberation Sans',sans-serif;transform:scaleX(0.9101);">LETICIA STUDIO 499</div>
<svg style="position:absolute;left:864px;top:358px;" width="6" height="6" viewBox="0 0 6 6"><path d="M0 0H5.3L0 5.3z" fill="#1e8a3a"/></svg>
<div class="t" id="t266" style="left:866.30px;top:361.74px;font-size:13.3px;font-weight:400;color:#000;font-family:'Liberation Sans',sans-serif;transform:scaleX(0.9529);">01080003177036761144</div>
<svg style="position:absolute;left:1014px;top:358px;" width="6" height="6" viewBox="0 0 6 6"><path d="M0 0H5.3L0 5.3z" fill="#1e8a3a"/></svg>
<div class="t" id="t267" style="left:1016.30px;top:361.74px;font-size:13.3px;font-weight:400;color:#000;font-family:'Liberation Sans',sans-serif;transform:scaleX(0.9564);">468,00</div>
<svg style="position:absolute;left:1144px;top:358px;" width="6" height="6" viewBox="0 0 6 6"><path d="M0 0H5.3L0 5.3z" fill="#1e8a3a"/></svg>
<div class="t" id="t268" style="left:1146.30px;top:361.74px;font-size:13.3px;font-weight:400;color:#000;font-family:'Liberation Sans',sans-serif;transform:scaleX(0.9620);">3.012,00</div>
<div class="t" id="t269" style="left:1309.30px;top:361.74px;font-size:13.3px;font-weight:400;color:#000;font-family:'Liberation Sans',sans-serif;transform:scaleX(0.9895);">08/04/26 10:30</div>
<svg style="position:absolute;left:1436px;top:358px;" width="6" height="6" viewBox="0 0 6 6"><path d="M0 0H5.3L0 5.3z" fill="#1e8a3a"/></svg>
<div class="t" id="t270" style="left:1438.30px;top:361.74px;font-size:13.3px;font-weight:400;color:#000;font-family:'Liberation Sans',sans-serif;transform:scaleX(0.9465);">2300013210</div>
<svg style="position:absolute;left:1513px;top:358px;" width="6" height="6" viewBox="0 0 6 6"><path d="M0 0H5.3L0 5.3z" fill="#1e8a3a"/></svg>
<div class="t" id="t271" style="left:1515.30px;top:361.74px;font-size:13.3px;font-weight:400;color:#000;font-family:'Liberation Sans',sans-serif;transform:scaleX(0.9564);">1.0000</div>
<svg style="position:absolute;left:1607px;top:358px;" width="6" height="6" viewBox="0 0 6 6"><path d="M0 0H5.3L0 5.3z" fill="#1e8a3a"/></svg>
<div class="t" id="t272" style="left:1609.30px;top:361.74px;font-size:13.3px;font-weight:400;color:#000;font-family:'Liberation Sans',sans-serif;transform:scaleX(0.9564);">0.0000</div>
<svg style="position:absolute;left:1715px;top:358px;" width="6" height="6" viewBox="0 0 6 6"><path d="M0 0H5.3L0 5.3z" fill="#1e8a3a"/></svg>
<div class="t" id="t273" style="left:1717.30px;top:361.74px;font-size:13.3px;font-weight:400;color:#000;font-family:'Liberation Sans',sans-serif;transform:scaleX(0.9564);">0.0000</div>
<div class="t" id="t274" style="left:1991.30px;top:361.74px;font-size:13.3px;font-weight:400;color:#000;font-family:'Liberation Sans',sans-serif;transform:scaleX(0.9895);">08/04/26 00:00</div>
<div class="t" id="t275" style="left:2120.30px;top:361.74px;font-size:13.3px;font-weight:400;color:#000;font-family:'Liberation Sans',sans-serif;transform:scaleX(0.9895);">20/04/26 00:00</div>
<div class="t" id="t276" style="left:2238.30px;top:361.74px;font-size:13.3px;font-weight:400;color:#000;font-family:'Liberation Sans',sans-serif;transform:scaleX(0.9895);">20/04/26 00:00</div>
<svg style="position:absolute;left:2372px;top:358px;" width="6" height="6" viewBox="0 0 6 6"><path d="M0 0H5.3L0 5.3z" fill="#1e8a3a"/></svg>
<div class="t" id="t277" style="left:2375.30px;top:361.74px;font-size:13.3px;font-weight:400;color:#000;font-family:'Liberation Sans',sans-serif;transform:scaleX(0.9463);">25338</div>
<div class="t" id="t278" style="left:2586.30px;top:361.74px;font-size:13.3px;font-weight:400;color:#000;font-family:'Liberation Sans',sans-serif;">LF - Liberado Financeiro</div>
<div class="t" id="t279" style="left:2742.30px;top:361.74px;font-size:13.3px;font-weight:400;color:#e3323f;font-family:'Liberation Sans',sans-serif;transform:scaleX(1.0538);">Pendente</div>
<div class="t" id="t280" style="left:29.30px;top:381.74px;font-size:13.3px;font-weight:400;color:#000;font-family:'Liberation Sans',sans-serif;transform:scaleX(0.9364);">1 - (01) LOEIL MATRIZ</div>
<div class="t" id="t281" style="left:181.30px;top:381.74px;font-size:13.3px;font-weight:400;color:#000;font-family:'Liberation Sans',sans-serif;transform:scaleX(0.9348);">2 - (02) LOEIL D&amp;D</div>
<div class="t" id="t282" style="left:298.30px;top:381.74px;font-size:13.3px;font-weight:400;color:#000;font-family:'Liberation Sans',sans-serif;transform:scaleX(0.9242);">PEDIDO DE DEMONSTRACAO(PM)</div>
<svg style="position:absolute;left:513px;top:378px;" width="6" height="6" viewBox="0 0 6 6"><path d="M0 0H5.3L0 5.3z" fill="#1e8a3a"/></svg>
<div class="t" id="t283" style="left:515.30px;top:381.74px;font-size:13.3px;font-weight:400;color:#000;font-family:'Liberation Sans',sans-serif;transform:scaleX(0.9461);">4055</div>
<svg style="position:absolute;left:568px;top:378px;" width="6" height="6" viewBox="0 0 6 6"><path d="M0 0H5.3L0 5.3z" fill="#1e8a3a"/></svg>
<div class="t" id="t284" style="left:570.30px;top:381.74px;font-size:13.3px;font-weight:400;color:#000;font-family:'Liberation Sans',sans-serif;transform:scaleX(0.9464);">30928078</div>
<svg style="position:absolute;left:631px;top:378px;" width="6" height="6" viewBox="0 0 6 6"><path d="M0 0H5.3L0 5.3z" fill="#1e8a3a"/></svg>
<div class="t" id="t285" style="left:633.30px;top:381.74px;font-size:13.3px;font-weight:400;color:#000;font-family:'Liberation Sans',sans-serif;transform:scaleX(0.9451);">2</div>
<div class="t" id="t286" style="left:671.30px;top:381.74px;font-size:13.3px;font-weight:400;color:#000;font-family:'Liberation Sans',sans-serif;transform:scaleX(0.9101);">LETICIA STUDIO 499</div>
<svg style="position:absolute;left:864px;top:378px;" width="6" height="6" viewBox="0 0 6 6"><path d="M0 0H5.3L0 5.3z" fill="#1e8a3a"/></svg>
<div class="t" id="t287" style="left:866.30px;top:381.74px;font-size:13.3px;font-weight:400;color:#000;font-family:'Liberation Sans',sans-serif;transform:scaleX(0.9465);">01080004948086297405</div>
<svg style="position:absolute;left:1014px;top:378px;" width="6" height="6" viewBox="0 0 6 6"><path d="M0 0H5.3L0 5.3z" fill="#1e8a3a"/></svg>
<div class="t" id="t288" style="left:1016.30px;top:381.74px;font-size:13.3px;font-weight:400;color:#000;font-family:'Liberation Sans',sans-serif;transform:scaleX(0.9564);">125,00</div>
<svg style="position:absolute;left:1144px;top:378px;" width="6" height="6" viewBox="0 0 6 6"><path d="M0 0H5.3L0 5.3z" fill="#1e8a3a"/></svg>
<div class="t" id="t289" style="left:1146.30px;top:381.74px;font-size:13.3px;font-weight:400;color:#000;font-family:'Liberation Sans',sans-serif;transform:scaleX(0.9620);">1.244,00</div>
<div class="t" id="t290" style="left:1309.30px;top:381.74px;font-size:13.3px;font-weight:400;color:#000;font-family:'Liberation Sans',sans-serif;transform:scaleX(0.9895);">08/04/26 10:30</div>
<svg style="position:absolute;left:1436px;top:378px;" width="6" height="6" viewBox="0 0 6 6"><path d="M0 0H5.3L0 5.3z" fill="#1e8a3a"/></svg>
<div class="t" id="t291" style="left:1438.30px;top:381.74px;font-size:13.3px;font-weight:400;color:#000;font-family:'Liberation Sans',sans-serif;transform:scaleX(0.9465);">2200002668</div>
<svg style="position:absolute;left:1513px;top:378px;" width="6" height="6" viewBox="0 0 6 6"><path d="M0 0H5.3L0 5.3z" fill="#1e8a3a"/></svg>
<div class="t" id="t292" style="left:1515.30px;top:381.74px;font-size:13.3px;font-weight:400;color:#000;font-family:'Liberation Sans',sans-serif;transform:scaleX(0.9564);">1.0000</div>
<svg style="position:absolute;left:1607px;top:378px;" width="6" height="6" viewBox="0 0 6 6"><path d="M0 0H5.3L0 5.3z" fill="#1e8a3a"/></svg>
<div class="t" id="t293" style="left:1609.30px;top:381.74px;font-size:13.3px;font-weight:400;color:#000;font-family:'Liberation Sans',sans-serif;transform:scaleX(0.9564);">1.0000</div>
<svg style="position:absolute;left:1715px;top:378px;" width="6" height="6" viewBox="0 0 6 6"><path d="M0 0H5.3L0 5.3z" fill="#1e8a3a"/></svg>
<div class="t" id="t294" style="left:1717.30px;top:381.74px;font-size:13.3px;font-weight:400;color:#000;font-family:'Liberation Sans',sans-serif;transform:scaleX(0.9564);">1.0000</div>
<div class="t" id="t295" style="left:1991.30px;top:381.74px;font-size:13.3px;font-weight:400;color:#000;font-family:'Liberation Sans',sans-serif;transform:scaleX(0.9895);">08/04/26 00:00</div>
<div class="t" id="t296" style="left:2120.30px;top:381.74px;font-size:13.3px;font-weight:400;color:#000;font-family:'Liberation Sans',sans-serif;transform:scaleX(0.9895);">20/04/26 00:00</div>
<div class="t" id="t297" style="left:2238.30px;top:381.74px;font-size:13.3px;font-weight:400;color:#000;font-family:'Liberation Sans',sans-serif;transform:scaleX(0.9895);">20/04/26 00:00</div>
<svg style="position:absolute;left:2372px;top:378px;" width="6" height="6" viewBox="0 0 6 6"><path d="M0 0H5.3L0 5.3z" fill="#1e8a3a"/></svg>
<div class="t" id="t298" style="left:2375.30px;top:381.74px;font-size:13.3px;font-weight:400;color:#000;font-family:'Liberation Sans',sans-serif;transform:scaleX(0.9463);">25338</div>
<svg style="position:absolute;left:2469px;top:378px;" width="6" height="6" viewBox="0 0 6 6"><path d="M0 0H5.3L0 5.3z" fill="#1e8a3a"/></svg>
<div class="t" id="t299" style="left:2471.30px;top:381.74px;font-size:13.3px;font-weight:400;color:#000;font-family:'Liberation Sans',sans-serif;transform:scaleX(0.9463);">25341</div>
<div class="t" id="t300" style="left:2586.30px;top:381.74px;font-size:13.3px;font-weight:400;color:#000;font-family:'Liberation Sans',sans-serif;">LF - Liberado Financeiro</div>
<div class="t" id="t301" style="left:2742.30px;top:381.74px;font-size:13.3px;font-weight:400;color:#33cc33;font-family:'Liberation Sans',sans-serif;transform:scaleX(1.0618);">Devolvido</div>
<div class="t" id="t302" style="left:498.60px;top:341.74px;font-size:13.3px;font-weight:400;color:#000;font-family:'Liberation Sans',sans-serif;transform:scaleX(1.0366);">)</div>
<div style="position:absolute;left:479px;top:338px;width:20px;height:20px;background:#fff;box-sizing:border-box;border:1px solid #b4b4b4"></div>
<svg style="position:absolute;left:481.5px;top:341px;" width="15" height="14" viewBox="0 0 15 14"><defs><pattern id="chk" width="2" height="2" patternUnits="userSpaceOnUse"><rect width="2" height="2" fill="#ffe46a"/><rect width="1" height="1" fill="#fff6c8"/><rect x="1" y="1" width="1" height="1" fill="#fff6c8"/></pattern></defs><path d="M7.3 0.5L14 7L7.3 13.5L0.6 7z" fill="url(#chk)" stroke="#f0c419" stroke-width="0.9"/><path d="M7.3 3.5v5" stroke="#888" stroke-width="1.6"/><rect x="6.5" y="9.6" width="1.6" height="1.6" fill="#888"/></svg>
<div style="position:absolute;left:511px;top:336px;width:58px;height:23px;box-sizing:border-box;border:2px solid #217346"></div>
<div style="position:absolute;left:564px;top:354px;width:7px;height:6px;background:#217346;border:1px solid #fff;box-sizing:border-box"></div>
<div style="position:absolute;left:2370px;top:222px;width:215px;height:178px;box-sizing:border-box;border:2px solid #f07878"></div>
<div style="position:absolute;left:2877px;top:237px;width:19px;height:193px;background:#e6e6e6"></div>
<div style="position:absolute;left:2880px;top:239px;width:15px;height:191px;background:#dedede"></div>
<div style="position:absolute;left:2880px;top:239px;width:15px;height:16px;background:#fff;box-sizing:border-box;border:1px solid #c6c6c6"></div>
<svg style="position:absolute;left:2883px;top:244px;" width="9" height="6" viewBox="0 0 9 6"><path d="M0.5 5.5L4.5 1.5L8.5 5.5z" fill="#777"/></svg>
<div style="position:absolute;left:2880px;top:255px;width:15px;height:62px;background:#fff;box-sizing:border-box;border:1px solid #c6c6c6"></div>
<div style="position:absolute;left:2880px;top:416px;width:15px;height:14px;background:#fff;box-sizing:border-box;border:1px solid #c6c6c6"></div>
<svg style="position:absolute;left:2883px;top:421.5px;" width="9" height="6" viewBox="0 0 9 6"><path d="M0.5 0.5L4.5 4.5L8.5 0.5z" fill="#777"/></svg>
<div style="position:absolute;left:1px;top:430px;width:2896px;height:29px;background:#e6e6e6"></div>
<div style="position:absolute;left:1px;top:430px;width:2896px;height:1px;background:#ababab"></div>
<div style="position:absolute;left:1px;top:458px;width:2896px;height:1px;background:#c6c6c6"></div>
<svg style="position:absolute;left:27px;top:440px;" width="6" height="8" viewBox="0 0 6 8"><path d="M5 0.5V7.5L0.5 4z" fill="#c6c6c6"/></svg>
<svg style="position:absolute;left:56px;top:440px;" width="6" height="8" viewBox="0 0 6 8"><path d="M0.5 0.5V7.5L5 4z" fill="#c6c6c6"/></svg>
<div style="position:absolute;left:101px;top:430px;width:65px;height:25px;background:#fff;box-sizing:border-box;border-left:1px solid #ababab;border-right:1px solid #ababab"></div>
<div style="position:absolute;left:101px;top:453px;width:65px;height:2px;background:#217346"></div>
<div class="t" id="t303" style="left:113.00px;top:435.95px;font-size:14px;font-weight:700;color:#217346;font-family:'Liberation Sans',sans-serif;transform:scaleX(0.8798);">Sheet1</div>
<svg style="position:absolute;left:198px;top:435px;" width="18" height="18" viewBox="0 0 18 18"><circle cx="9" cy="9" r="7.8" fill="none" stroke="#777" stroke-width="1.2"/><path d="M9 4.5v9M4.5 9h9" stroke="#777" stroke-width="1.8"/></svg>
<svg style="position:absolute;left:1147px;top:439px;" width="2" height="10" viewBox="0 0 2 10"><g fill="#9a9a9a"><rect x="0" y="0.5" width="2" height="2"/><rect x="0" y="4.3" width="2" height="2"/><rect x="0" y="8.1" width="2" height="2"/></g></svg>
<div style="position:absolute;left:1164px;top:437px;width:440px;height:15px;background:#fff;box-sizing:border-box;border:1px solid #ababab;border-right:none"></div>
<div style="position:absolute;left:1179px;top:437px;width:1px;height:15px;background:#ababab"></div>
<svg style="position:absolute;left:1168px;top:440px;" width="7" height="9" viewBox="0 0 7 9"><path d="M5.5 0.5V8.5L1 4.5z" fill="#666"/></svg>
<svg style="position:absolute;left:2134px;top:439px;" width="2" height="10" viewBox="0 0 2 10"><g fill="#9a9a9a"><rect x="0" y="0.5" width="2" height="2"/><rect x="0" y="4.3" width="2" height="2"/><rect x="0" y="8.1" width="2" height="2"/></g></svg>
<div style="position:absolute;left:2151px;top:437px;width:726px;height:15px;background:#dadada"></div>
<div style="position:absolute;left:2151px;top:437px;width:15px;height:15px;background:#fff;box-sizing:border-box;border:1px solid #ababab"></div>
<svg style="position:absolute;left:2155px;top:440px;" width="7" height="9" viewBox="0 0 7 9"><path d="M5.5 0.5V8.5L1 4.5z" fill="#666"/></svg>
<div style="position:absolute;left:2420px;top:437px;width:442px;height:15px;background:#fff;box-sizing:border-box;border:1px solid #ababab"></div>
<div style="position:absolute;left:2861px;top:437px;width:16px;height:15px;background:#fff;box-sizing:border-box;border:1px solid #ababab"></div>
<svg style="position:absolute;left:2866px;top:440px;" width="7" height="9" viewBox="0 0 7 9"><path d="M1 0.5V8.5L5.5 4.5z" fill="#666"/></svg>
<div class="t" id="t304" style="left:8.40px;top:463.44px;font-size:12px;font-weight:400;color:#444;font-family:'Liberation Sans',sans-serif;transform:scaleX(0.9616);">Pronto</div>
<div style="position:absolute;left:2595px;top:459px;width:38px;height:21px;background:#c6c6c6"></div>
<svg style="position:absolute;left:2607px;top:462px;" width="13" height="13" viewBox="0 0 13 13"><path d="M0.5 0.5h12v12h-12zM4.5 0.5v12M8.5 0.5v12M0.5 4.5h12M0.5 8.5h12" fill="none" stroke="#666"/></svg>
<svg style="position:absolute;left:2645px;top:462px;" width="14" height="13" viewBox="0 0 14 13"><rect x="0.5" y="0.5" width="13" height="12" fill="none" stroke="#666"/><rect x="2.5" y="2.5" width="9" height="8" fill="none" stroke="#666"/><path d="M4.5 5h5M4.5 7h5M4.5 9h5" stroke="#666" stroke-width="0.8"/></svg>
<svg style="position:absolute;left:2683px;top:462px;" width="14" height="13" viewBox="0 0 14 13"><rect x="0.5" y="0.5" width="13" height="12" fill="none" stroke="#666"/><path d="M4.5 0.5v7h9M8.5 0.5v7" fill="none" stroke="#666"/></svg>
<div style="position:absolute;left:2714px;top:468px;width:6px;height:1.5px;background:#555"></div>
<div style="position:absolute;left:2724px;top:468px;width:100px;height:1px;background:#a0a0a0"></div>
<div style="position:absolute;left:2772px;top:463px;width:4px;height:11px;background:#666"></div>
<svg style="position:absolute;left:2828px;top:464px;" width="9" height="9" viewBox="0 0 9 9"><path d="M4.5 0v9M0 4.5h9" stroke="#555" stroke-width="1.6"/></svg>
<div class="t" id="t305" style="left:2851.60px;top:464.09px;font-size:11px;font-weight:400;color:#444;font-family:'Liberation Sans',sans-serif;transform:scaleX(0.9381);">100%</div>
</body></html>
